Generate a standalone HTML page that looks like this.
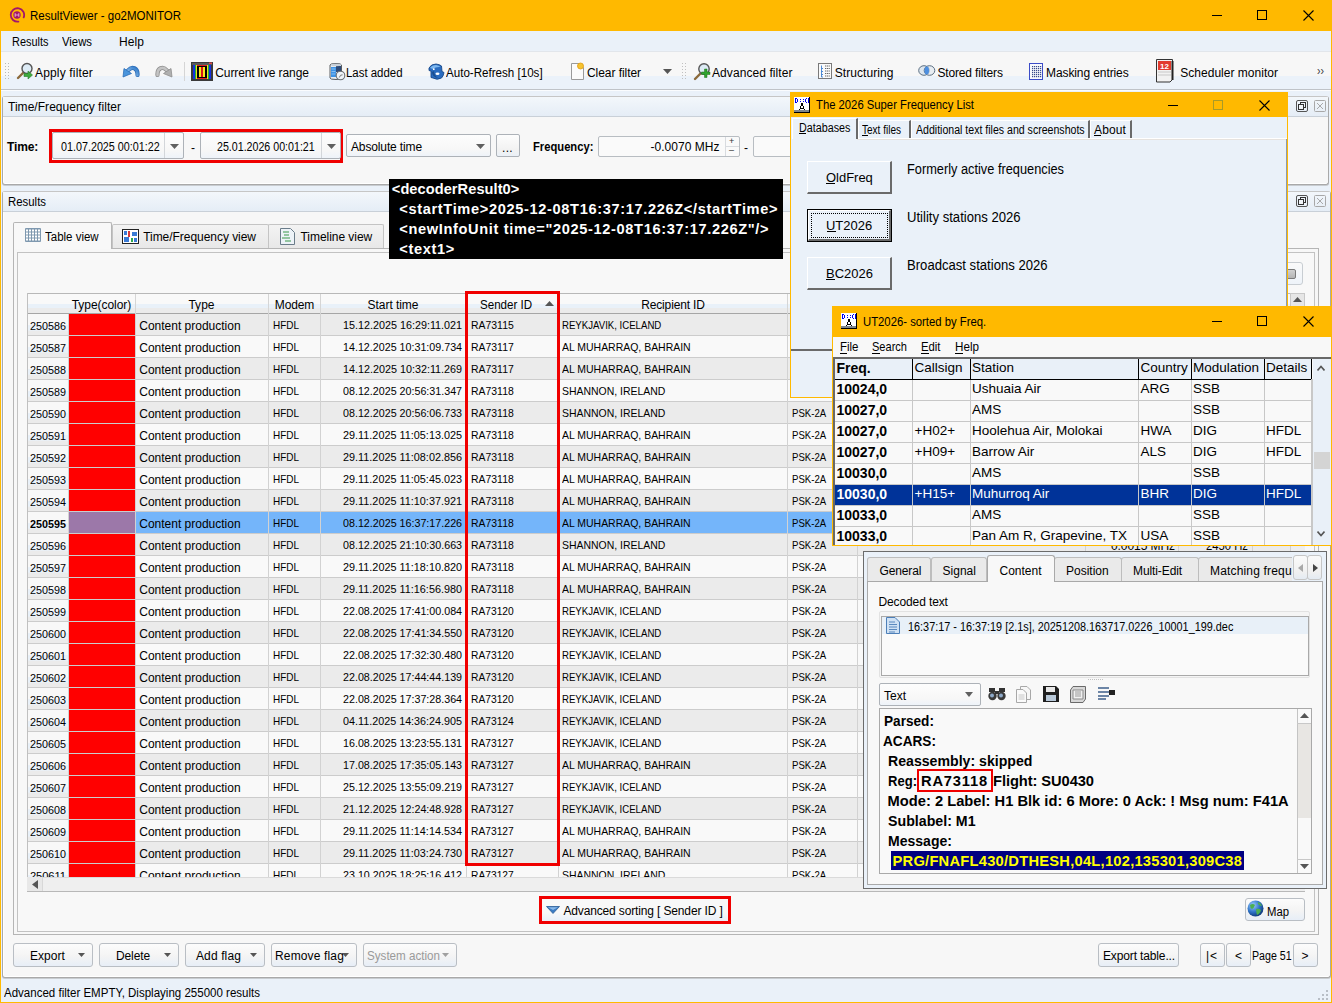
<!DOCTYPE html>
<html><head><meta charset="utf-8"><title>ResultViewer</title>
<style>
html,body{margin:0;padding:0;background:#F7F7F7;}
#root{position:relative;width:1332px;height:1003px;overflow:hidden;font-family:"Liberation Sans", sans-serif;color:#000;background:#F7F7F7;}
#root div{position:absolute;box-sizing:border-box;}
#root svg{position:absolute;}
.t{white-space:nowrap;line-height:1;}
</style></head><body><div id="root">

<div style="left:0px;top:0px;width:1332px;height:1003px;background:#FFB900;"></div>
<div style="left:1px;top:31px;width:1330px;height:971px;background:#EAF1F9;"></div>
<svg style="left:9px;top:7px" width="17" height="17" viewBox="0 0 17 17"><path d="M14.7 10.4 A6.7 6.7 0 1 0 9.4 14.6" fill="none" stroke="#A3166A" stroke-width="1.8" stroke-linecap="round"/><circle cx="8" cy="8" r="3.7" fill="#A3166A"/><path d="M6.2 6.3V9.7M9.8 6.3V9.7M6.2 8H9.8" stroke="#E3A6C8" stroke-width="1.1"/></svg>
<div class="t" style="left:30.00px;top:9.84px;font-size:12px;transform:scaleX(0.9581);transform-origin:0 0;">ResultViewer - go2MONITOR</div>
<div style="left:1212px;top:15px;width:10px;height:1px;background:#000;"></div>
<div style="left:1257px;top:10px;width:10px;height:10px;border:1px solid #000;"></div>
<svg style="left:1303px;top:10px" width="11" height="11" viewBox="0 0 11 11"><path d="M0.5 0.5L10.5 10.5M10.5 0.5L0.5 10.5" stroke="#000" stroke-width="1.1"/></svg>
<div style="left:1px;top:31px;width:1330px;height:21px;background:#EAF1F9;"></div>
<div class="t" style="left:11.50px;top:36.34px;font-size:12px;transform:scaleX(0.9097);transform-origin:0 0;">Results</div>
<div class="t" style="left:62.00px;top:36.34px;font-size:12px;transform:scaleX(0.9436);transform-origin:0 0;">Views</div>
<div class="t" style="left:119.00px;top:36.34px;font-size:12px;letter-spacing:0.080px;">Help</div>
<div style="left:1px;top:51px;width:1330px;height:1px;background:#E2E6EB;"></div>
<div style="left:1px;top:52px;width:1330px;height:24px;background:#F7F7F7;"></div>
<div style="left:1px;top:76px;width:1330px;height:13px;background:#EBF2FA;"></div>
<div style="left:1px;top:89px;width:1330px;height:1px;background:#BFC3C8;"></div>
<div style="left:1px;top:90px;width:1330px;height:1px;background:#FAFCFE;"></div>
<svg style="left:5px;top:62px" width="6" height="19"><rect x="0" y="1" width="1" height="1" fill="#B8B8B8"/><rect x="0" y="4" width="1" height="1" fill="#B8B8B8"/><rect x="0" y="7" width="1" height="1" fill="#B8B8B8"/><rect x="0" y="10" width="1" height="1" fill="#B8B8B8"/><rect x="0" y="13" width="1" height="1" fill="#B8B8B8"/><rect x="0" y="16" width="1" height="1" fill="#B8B8B8"/><rect x="3" y="1" width="1" height="1" fill="#B8B8B8"/><rect x="3" y="4" width="1" height="1" fill="#B8B8B8"/><rect x="3" y="7" width="1" height="1" fill="#B8B8B8"/><rect x="3" y="10" width="1" height="1" fill="#B8B8B8"/><rect x="3" y="13" width="1" height="1" fill="#B8B8B8"/><rect x="3" y="16" width="1" height="1" fill="#B8B8B8"/></svg>
<svg style="left:16px;top:62px" width="18" height="18" viewBox="0 0 18 18"><line x1="2" y1="16" x2="7" y2="11" stroke="#8C6A3A" stroke-width="2.4" stroke-linecap="round"/><circle cx="11" cy="6.5" r="5" fill="#DDEBF5" stroke="#555" stroke-width="1.4"/><path d="M8 11.5h4v-2.5l4.5 4 -4.5 4v-2.5h-4z" fill="#3DAA3D" stroke="#2A7A2A" stroke-width="0.6"/></svg>
<div class="t" style="left:35.00px;top:67.34px;font-size:12px;letter-spacing:0.165px;">Apply filter</div>
<svg style="left:122px;top:64px" width="18" height="14" viewBox="0 0 18 14"><defs><linearGradient id="ug" x1="0" y1="1" x2="1" y2="0"><stop offset="0" stop-color="#9CCBF2"/><stop offset="1" stop-color="#2E78C8"/></linearGradient></defs><path d="M15.5 11 C16 4, 10 1.5, 6 6.5" fill="none" stroke="#2C6DB8" stroke-width="4.2" stroke-linecap="round"/><path d="M15.5 11 C16 4, 10 1.5, 6 6.5" fill="none" stroke="url(#ug)" stroke-width="2.6" stroke-linecap="round"/><path d="M1 13 L2 4.5 L9.5 9.5Z" fill="#4A95DC" stroke="#2C6DB8" stroke-width="0.8" stroke-linejoin="round"/></svg>
<svg style="left:155px;top:64px" width="18" height="14" viewBox="0 0 18 14"><path d="M2.5 11 C2 4, 8 1.5, 12 6.5" fill="none" stroke="#8E8E8E" stroke-width="4.2" stroke-linecap="round"/><path d="M2.5 11 C2 4, 8 1.5, 12 6.5" fill="none" stroke="#C4C4C4" stroke-width="2.6" stroke-linecap="round"/><path d="M17 13 L16 4.5 L8.5 9.5Z" fill="#B0B0B0" stroke="#8E8E8E" stroke-width="0.8" stroke-linejoin="round"/></svg>
<div style="left:184px;top:62px;width:1px;height:19px;background:#D5D5D5;"></div>
<svg style="left:191px;top:62px" width="22" height="19" viewBox="0 0 22 19"><rect x="0" y="0" width="22" height="19" fill="#3A3A3A"/><rect x="1" y="1" width="20" height="2" fill="#5A5A5A"/><rect x="18" y="0.5" width="3" height="1.5" fill="#E04848"/><rect x="2" y="3" width="18" height="14" fill="#1430E0"/><rect x="4" y="3" width="14" height="14" fill="#20B030"/><rect x="5" y="3" width="12" height="14" fill="#F0E020"/><rect x="6" y="3" width="10" height="14" fill="#E02020"/><rect x="6" y="4" width="10" height="12" fill="#000"/><rect x="8" y="5" width="6" height="10" fill="#F6E81C"/><rect x="10" y="5" width="2" height="10" fill="#D81818"/></svg>
<div class="t" style="left:215.30px;top:67.34px;font-size:12px;letter-spacing:-0.105px;">Current live range</div>
<svg style="left:329px;top:62px" width="17" height="19" viewBox="0 0 17 19"><path d="M1 3 Q1 1.5 7 1.5 Q12.5 1.5 12.5 3 V16 Q12.5 17.5 7 17.5 Q1 17.5 1 16Z" fill="#E8ECF0" stroke="#5A5E62" stroke-width="1"/><rect x="2" y="5" width="5" height="10" fill="#3D93E6"/><rect x="7" y="4" width="5" height="6" fill="#2D4A78"/><path d="M2.5 7h4M2.5 9.5h4M2.5 12h4" stroke="#9CCAF2" stroke-width="0.8"/><ellipse cx="7" cy="3" rx="5" ry="1.2" fill="#C8D0D8"/><circle cx="11.5" cy="13.5" r="4.3" fill="#EEF3F8" stroke="#6A6E72" stroke-width="1.1"/><path d="M10.3 15.5L11.5 13.3L13.5 12.8" stroke="#777" stroke-width="1" fill="none"/></svg>
<div class="t" style="left:346.00px;top:67.34px;font-size:12px;transform:scaleX(0.9514);transform-origin:0 0;">Last added</div>
<svg style="left:427px;top:62px" width="18" height="19" viewBox="0 0 18 19"><path d="M2 6 Q4 2 9 2 Q13 2.5 14.5 4 L15 9.5 L17 10.5 Q16.5 14 14.5 16 Q10 18.5 6 16 L4 15.5 L4 9 L2 8.5Z" fill="#2A6CC0" stroke="#17488A" stroke-width="0.9"/><path d="M3 6 Q5 3 9 3 Q12 3.5 13.5 5 Q9 4.5 6 7Z" fill="#7DB8F0"/><path d="M5 10 Q5 15 11 16 Q7 13 7 9Z" fill="#1C4F90"/><ellipse cx="10.5" cy="11.8" rx="2" ry="1.3" fill="#FFFFFF"/><circle cx="6.8" cy="7.2" r="0.9" fill="#FFFFFF"/></svg>
<div class="t" style="left:446.40px;top:67.34px;font-size:12px;transform:scaleX(0.9655);transform-origin:0 0;">Auto-Refresh [10s]</div>
<svg style="left:570px;top:62px" width="15" height="19" viewBox="0 0 15 19"><path d="M1.5 1.5H9.5L13.5 5.5V17.5H1.5Z" fill="#FBFBFB" stroke="#9A9A9A" stroke-width="1"/><circle cx="10.5" cy="4" r="3" fill="#F6C430" stroke="#E09A10" stroke-width="0.8"/></svg>
<div class="t" style="left:587.00px;top:67.34px;font-size:12px;letter-spacing:-0.057px;">Clear filter</div>
<svg style="left:663px;top:69px" width="9" height="5" viewBox="0 0 9 5"><path d="M0 0H9L4.5 5Z" fill="#555"/></svg>
<svg style="left:682px;top:62px" width="5" height="19"><rect x="0" y="1" width="1" height="1" fill="#C0C0C0"/><rect x="0" y="4" width="1" height="1" fill="#C0C0C0"/><rect x="0" y="7" width="1" height="1" fill="#C0C0C0"/><rect x="0" y="10" width="1" height="1" fill="#C0C0C0"/><rect x="0" y="13" width="1" height="1" fill="#C0C0C0"/><rect x="0" y="16" width="1" height="1" fill="#C0C0C0"/><rect x="3" y="1" width="1" height="1" fill="#C0C0C0"/><rect x="3" y="4" width="1" height="1" fill="#C0C0C0"/><rect x="3" y="7" width="1" height="1" fill="#C0C0C0"/><rect x="3" y="10" width="1" height="1" fill="#C0C0C0"/><rect x="3" y="13" width="1" height="1" fill="#C0C0C0"/><rect x="3" y="16" width="1" height="1" fill="#C0C0C0"/></svg>
<svg style="left:693px;top:62px" width="18" height="19" viewBox="0 0 18 19"><line x1="2" y1="17" x2="7" y2="12" stroke="#8C6A3A" stroke-width="2.4" stroke-linecap="round"/><circle cx="11" cy="7" r="5.2" fill="#DDEBF5" stroke="#555" stroke-width="1.4"/><path d="M11 10h3v-3h2.5v3h3v2.5h-3v3h-2.5v-3h-3z" transform="translate(-2.5,0)" fill="#2FA32F" stroke="#1F6F1F" stroke-width="0.5"/></svg>
<div class="t" style="left:712.00px;top:67.34px;font-size:12px;letter-spacing:0.075px;">Advanced filter</div>
<svg style="left:818px;top:63px" width="14" height="16" viewBox="0 0 14 16"><rect x="0.5" y="0.5" width="13" height="15" fill="#FAFAFA" stroke="#7A7A7A"/><path d="M3.5 2.5V14M3.5 5.5H5M3.5 8.5H5M3.5 11.5H5M3.5 14H5" stroke="#3C7FD0" stroke-width="0.9" fill="none"/><path d="M7 3h5M7 5.5h5M7 8h5M7 10.5h5M7 13h5" stroke="#555" stroke-width="0.9" stroke-dasharray="1.2 0.6"/></svg>
<div class="t" style="left:834.70px;top:67.34px;font-size:12px;letter-spacing:0.070px;">Structuring</div>
<svg style="left:918px;top:65px" width="18" height="11" viewBox="0 0 18 11"><ellipse cx="6" cy="5.5" rx="5.3" ry="4.8" fill="#DDE6EE" stroke="#5A6E82" stroke-width="1"/><ellipse cx="11.5" cy="5.5" rx="5.3" ry="4.8" fill="#DDE6EE" fill-opacity="0.6" stroke="#5A6E82" stroke-width="1"/><ellipse cx="8.75" cy="5.5" rx="2.3" ry="3.9" fill="#4D8FE0"/></svg>
<div class="t" style="left:937.40px;top:67.34px;font-size:12px;letter-spacing:-0.140px;">Stored filters</div>
<svg style="left:1029px;top:63px" width="15" height="17" viewBox="0 0 15 17"><rect x="0.5" y="0.5" width="13" height="16" fill="#F8F9FD" stroke="#3C4CC8"/><rect x="3" y="3" width="1.2" height="1.2" fill="#3A4A8A"/><rect x="5" y="3" width="1.2" height="1.2" fill="#3A4A8A"/><rect x="7" y="3" width="1.2" height="1.2" fill="#3A4A8A"/><rect x="9" y="3" width="1.2" height="1.2" fill="#3A4A8A"/><rect x="11" y="3" width="1.2" height="1.2" fill="#3A4A8A"/><rect x="3" y="5" width="1.2" height="1.2" fill="#3A4A8A"/><rect x="5" y="5" width="1.2" height="1.2" fill="#3A4A8A"/><rect x="7" y="5" width="1.2" height="1.2" fill="#3A4A8A"/><rect x="9" y="5" width="1.2" height="1.2" fill="#3A4A8A"/><rect x="11" y="5" width="1.2" height="1.2" fill="#3A4A8A"/><rect x="3" y="7" width="1.2" height="1.2" fill="#3A4A8A"/><rect x="5" y="7" width="1.2" height="1.2" fill="#3A4A8A"/><rect x="7" y="7" width="1.2" height="1.2" fill="#3A4A8A"/><rect x="9" y="7" width="1.2" height="1.2" fill="#3A4A8A"/><rect x="11" y="7" width="1.2" height="1.2" fill="#3A4A8A"/><rect x="3" y="9" width="1.2" height="1.2" fill="#3A4A8A"/><rect x="5" y="9" width="1.2" height="1.2" fill="#3A4A8A"/><rect x="7" y="9" width="1.2" height="1.2" fill="#3A4A8A"/><rect x="9" y="9" width="1.2" height="1.2" fill="#3A4A8A"/><rect x="11" y="9" width="1.2" height="1.2" fill="#3A4A8A"/><rect x="3" y="11" width="1.2" height="1.2" fill="#3A4A8A"/><rect x="5" y="11" width="1.2" height="1.2" fill="#3A4A8A"/><rect x="7" y="11" width="1.2" height="1.2" fill="#3A4A8A"/><rect x="9" y="11" width="1.2" height="1.2" fill="#3A4A8A"/><rect x="11" y="11" width="1.2" height="1.2" fill="#3A4A8A"/><rect x="3" y="13" width="1.2" height="1.2" fill="#3A4A8A"/><rect x="5" y="13" width="1.2" height="1.2" fill="#3A4A8A"/><rect x="7" y="13" width="1.2" height="1.2" fill="#3A4A8A"/><rect x="9" y="13" width="1.2" height="1.2" fill="#3A4A8A"/><rect x="11" y="13" width="1.2" height="1.2" fill="#3A4A8A"/></svg>
<div class="t" style="left:1046.00px;top:67.34px;font-size:12px;letter-spacing:-0.096px;">Masking entries</div>
<svg style="left:1155px;top:58px" width="21" height="25" viewBox="0 0 21 25"><path d="M1.5 1.5H17.5V21.5L15 24H1.5Z" fill="#F2F2F2" stroke="#333" stroke-width="1"/><rect x="3" y="3" width="13" height="9" fill="#E23B2E"/><text x="9.5" y="10.5" font-family="Liberation Sans" font-size="8" font-weight="700" fill="#fff" text-anchor="middle">12</text><path d="M3 14h13M3 17h13" stroke="#C8C8C8" stroke-width="1"/><path d="M17.5 3V22" stroke="#222" stroke-width="2"/></svg>
<div class="t" style="left:1180.30px;top:67.34px;font-size:12px;letter-spacing:0.018px;">Scheduler monitor</div>
<div class="t" style="left:1317.00px;top:64.84px;font-size:12px;transform:scaleX(0.8758);transform-origin:0 0;color:#444;">››</div>
<div style="left:2px;top:96px;width:1327px;height:89px;background:#F7F7F7;border:1px solid #A9A9A9;border-top-color:#C6C6C6;border-radius:3px;box-shadow:inset 1px 0 0 #FFF,inset 0 -1px 0 #FFF,0 1px 0 #C8CCD0;"></div>
<div style="left:3px;top:97px;width:1325px;height:20px;background:linear-gradient(#F3F7FB,#E5EDF6);border-bottom:1px solid #C9D0D8;"></div>
<div class="t" style="left:8.00px;top:100.84px;font-size:12px;letter-spacing:0.035px;">Time/Frequency filter</div>
<svg style="left:1296px;top:100px" width="12" height="12" viewBox="0 0 12 12"><rect x="0.5" y="0.5" width="11" height="11" rx="1.5" fill="none" stroke="#555"/><rect x="4.5" y="2.5" width="5" height="5" fill="none" stroke="#333"/><rect x="2.5" y="4.5" width="5" height="5" fill="#F0F4F8" stroke="#333"/></svg>
<svg style="left:1314px;top:100px" width="12" height="12" viewBox="0 0 12 12"><rect x="0.5" y="0.5" width="11" height="11" rx="1" fill="none" stroke="#A8A8A8"/><path d="M3 3L9 9M9 3L3 9" stroke="#A0A0A0" stroke-width="0.9"/></svg>
<div class="t" style="left:7.00px;top:141.34px;font-size:12px;font-weight:700;letter-spacing:-0.158px;">Time:</div>
<div style="left:49px;top:129px;width:294px;height:34px;border:3px solid #F00000;"></div>
<div style="left:52px;top:132px;width:132px;height:27px;background:linear-gradient(#FDFDFD 0%,#F7F7F7 70%,#EEF3F9 100%);border:1px solid #ADB2B8;border-radius:2px;"></div>
<div style="left:164px;top:133px;width:1px;height:25px;background:#D3D6DA;"></div>
<svg style="left:169.5px;top:143.5px" width="9" height="5" viewBox="0 0 9 5"><path d="M0 0H9L4.5 5Z" fill="#606060"/></svg>
<div class="t" style="left:61.00px;top:140.54px;font-size:12px;transform:scaleX(0.8964);transform-origin:0 0;">01.07.2025 00:01:22</div>
<div class="t" style="left:191.00px;top:141.54px;font-size:12px;">-</div>
<div style="left:200px;top:132px;width:141px;height:27px;background:linear-gradient(#FDFDFD 0%,#F7F7F7 70%,#EEF3F9 100%);border:1px solid #ADB2B8;border-radius:2px;"></div>
<div style="left:321px;top:133px;width:1px;height:25px;background:#D3D6DA;"></div>
<svg style="left:326.5px;top:143.5px" width="9" height="5" viewBox="0 0 9 5"><path d="M0 0H9L4.5 5Z" fill="#606060"/></svg>
<div class="t" style="left:217.30px;top:140.54px;font-size:12px;transform:scaleX(0.8873);transform-origin:0 0;">25.01.2026 00:01:21</div>
<div style="left:346px;top:134px;width:145px;height:23px;background:linear-gradient(#FDFDFD 0%,#F7F7F7 70%,#EEF3F9 100%);border:1px solid #ADB2B8;border-radius:2px;"></div>
<svg style="left:475.5px;top:143.5px" width="9" height="5" viewBox="0 0 9 5"><path d="M0 0H9L4.5 5Z" fill="#606060"/></svg>
<div style="left:468px;top:135px;width:1px;height:21px;background:transparent;"></div>
<div class="t" style="left:351.00px;top:140.54px;font-size:12px;letter-spacing:-0.131px;">Absolute time</div>
<div style="left:496px;top:134px;width:24px;height:23px;background:linear-gradient(#FDFDFD,#F2F2F2 70%,#EAF0F7);border:1px solid #ADB2B8;border-radius:2px;"></div>
<div class="t" style="left:502.00px;top:141.84px;font-size:12px;letter-spacing:0.333px;">...</div>
<div class="t" style="left:533.40px;top:140.54px;font-size:12px;font-weight:700;transform:scaleX(0.9338);transform-origin:0 0;">Frequency:</div>
<div style="left:598px;top:136px;width:142px;height:21px;background:#FAFAFA;border:1px solid #B8BDC2;border-radius:2px;"></div>
<div style="left:725px;top:137px;width:1px;height:19px;background:#D8DBDF;"></div>
<div class="t" style="left:729.00px;top:137.38px;font-size:9px;color:#333;">+</div>
<div class="t" style="left:729.00px;top:146.38px;font-size:9px;color:#333;">–</div>
<div style="left:726px;top:146px;width:13px;height:1px;background:#D8DBDF;"></div>
<div class="t" style="left:650.50px;top:140.54px;font-size:12px;letter-spacing:0.028px;">-0.0070 MHz</div>
<div class="t" style="left:744.00px;top:141.54px;font-size:12px;">-</div>
<div style="left:753px;top:136px;width:45px;height:21px;background:#FAFAFA;border:1px solid #B8BDC2;border-radius:2px;"></div>
<div style="left:2px;top:191px;width:1329px;height:787px;background:#F7F7F7;border:1px solid #A9A9A9;border-top-color:#C6C6C6;border-radius:3px;box-shadow:inset 1px 0 0 #FFF,inset 0 -1px 0 #FFF,0 1px 0 #C8CCD0;"></div>
<div style="left:3px;top:192px;width:1327px;height:20px;background:linear-gradient(#F3F7FB,#E5EDF6);border-bottom:1px solid #C9D0D8;"></div>
<div class="t" style="left:8.00px;top:195.84px;font-size:12px;transform:scaleX(0.9497);transform-origin:0 0;">Results</div>
<svg style="left:1296px;top:195px" width="12" height="12" viewBox="0 0 12 12"><rect x="0.5" y="0.5" width="11" height="11" rx="1.5" fill="none" stroke="#555"/><rect x="4.5" y="2.5" width="5" height="5" fill="none" stroke="#333"/><rect x="2.5" y="4.5" width="5" height="5" fill="#F0F4F8" stroke="#333"/></svg>
<svg style="left:1314px;top:195px" width="12" height="12" viewBox="0 0 12 12"><rect x="0.5" y="0.5" width="11" height="11" rx="1" fill="none" stroke="#A8A8A8"/><path d="M3 3L9 9M9 3L3 9" stroke="#A0A0A0" stroke-width="0.9"/></svg>
<div style="left:13px;top:248px;width:1306px;height:687px;border:1px solid #B5B5B5;background:#F7F7F7;"></div>
<div style="left:17px;top:252px;width:1298px;height:680px;border:1px solid #C2C2C2;background:#F8F8F8;"></div>
<div style="left:112px;top:224px;width:157px;height:24px;background:linear-gradient(#F3F3F3,#E8E8E8);border:1px solid #C4C4C4;border-bottom:none;border-radius:2px 2px 0 0;"></div>
<div style="left:268px;top:224px;width:116px;height:24px;background:linear-gradient(#F3F3F3,#E8E8E8);border:1px solid #C4C4C4;border-bottom:none;border-radius:2px 2px 0 0;"></div>
<div style="left:13px;top:222px;width:99px;height:27px;background:#F8F8F8;border:1px solid #B5B5B5;border-bottom:none;border-radius:2px 2px 0 0;"></div>
<svg style="left:25px;top:228px" width="16" height="14" viewBox="0 0 16 14"><rect x="0" y="0" width="16" height="14" rx="1" fill="#7E98AF"/><rect x="1" y="1.5" width="2" height="2" fill="#FFFFFF"/><rect x="1" y="4.5" width="2" height="2" fill="#FFFFFF"/><rect x="1" y="7.5" width="2" height="2" fill="#FFFFFF"/><rect x="1" y="10.5" width="2" height="2" fill="#FFFFFF"/><rect x="4" y="1.5" width="2" height="2" fill="#FFFFFF"/><rect x="4" y="4.5" width="2" height="2" fill="#FFFFFF"/><rect x="4" y="7.5" width="2" height="2" fill="#FFFFFF"/><rect x="4" y="10.5" width="2" height="2" fill="#FFFFFF"/><rect x="7" y="1.5" width="2" height="2" fill="#FFFFFF"/><rect x="7" y="4.5" width="2" height="2" fill="#FFFFFF"/><rect x="7" y="7.5" width="2" height="2" fill="#FFFFFF"/><rect x="7" y="10.5" width="2" height="2" fill="#FFFFFF"/><rect x="10" y="1.5" width="2" height="2" fill="#FFFFFF"/><rect x="10" y="4.5" width="2" height="2" fill="#FFFFFF"/><rect x="10" y="7.5" width="2" height="2" fill="#FFFFFF"/><rect x="10" y="10.5" width="2" height="2" fill="#FFFFFF"/><rect x="13" y="1.5" width="2" height="2" fill="#FFFFFF"/><rect x="13" y="4.5" width="2" height="2" fill="#FFFFFF"/><rect x="13" y="7.5" width="2" height="2" fill="#FFFFFF"/><rect x="13" y="10.5" width="2" height="2" fill="#FFFFFF"/></svg>
<div class="t" style="left:45.00px;top:230.64px;font-size:12px;transform:scaleX(0.9567);transform-origin:0 0;">Table view</div>
<svg style="left:122px;top:229px" width="17" height="15" viewBox="0 0 17 15"><rect x="0.5" y="0.5" width="16" height="14" fill="#fff" stroke="#222"/><rect x="2" y="2" width="3" height="4" fill="#3A7BD5"/><rect x="6" y="2" width="2" height="6" fill="#D53A3A"/><rect x="10" y="3" width="5" height="4" fill="#3A7BD5"/><rect x="2" y="8" width="5" height="5" fill="#3A7BD5"/><rect x="9" y="9" width="2" height="4" fill="#2EA84A"/><rect x="12" y="9" width="3" height="4" fill="#3A7BD5"/></svg>
<div class="t" style="left:143.20px;top:230.84px;font-size:12px;letter-spacing:-0.042px;">Time/Frequency view</div>
<svg style="left:280px;top:228px" width="15" height="17" viewBox="0 0 15 17"><path d="M0.5 0.5H10.5L14.5 4.5V16.5H0.5Z" fill="#EDF3F8" stroke="#6A7C8A"/><path d="M3 4h6M4 7h5M2 10h8M5 13h6" stroke="#3A9A4A" stroke-width="1.2"/></svg>
<div class="t" style="left:300.50px;top:230.84px;font-size:12px;letter-spacing:-0.042px;">Timeline view</div>
<div style="left:27px;top:293px;width:1278px;height:599px;overflow:hidden;background:#F9F9F9;">
<div style="left:0px;top:0px;width:1278px;height:21px;background:linear-gradient(#F9F9F9 0%,#F9F9F9 52%,#E9F1F9 53%,#E9F1F9 73%,#EBEBEB 74%,#EBEBEB 100%);border-top:1px solid #B8B8B8;border-bottom:1px solid #A6A6A6;"></div>
<div style="left:108px;top:1px;width:1px;height:20px;background:#D5D5D5;"></div>
<div style="left:241px;top:1px;width:1px;height:20px;background:#D5D5D5;"></div>
<div style="left:293px;top:1px;width:1px;height:20px;background:#D5D5D5;"></div>
<div style="left:439px;top:1px;width:1px;height:20px;background:#D5D5D5;"></div>
<div style="left:531px;top:1px;width:1px;height:20px;background:#D5D5D5;"></div>
<div style="left:760px;top:1px;width:1px;height:20px;background:#D5D5D5;"></div>
<div style="left:830px;top:1px;width:1px;height:20px;background:#D5D5D5;"></div>
<div style="left:1058px;top:1px;width:1px;height:20px;background:#D5D5D5;"></div>
<div style="left:1151px;top:1px;width:1px;height:20px;background:#D5D5D5;"></div>
<div style="left:1225px;top:1px;width:1px;height:20px;background:#D5D5D5;"></div>
<div style="left:1263px;top:1px;width:1px;height:20px;background:#D5D5D5;"></div>
<div class="t" style="left:44.70px;top:6.14px;font-size:12px;letter-spacing:-0.038px;">Type(color)</div>
<div class="t" style="left:161.43px;top:6.14px;font-size:12px;letter-spacing:0.031px;">Type</div>
<div class="t" style="left:247.84px;top:6.14px;font-size:12px;letter-spacing:-0.140px;">Modem</div>
<div class="t" style="left:340.61px;top:6.14px;font-size:12px;letter-spacing:-0.057px;">Start time</div>
<div class="t" style="left:452.91px;top:6.14px;font-size:12px;transform:scaleX(0.9656);transform-origin:0 0;">Sender ID</div>
<svg style="left:518px;top:8px" width="9" height="5" viewBox="0 0 9 5"><path d="M0 5H9L4.5 0Z" fill="#555"/></svg>
<div class="t" style="left:614.23px;top:6.14px;font-size:12px;letter-spacing:-0.152px;">Recipient ID</div>
<div style="left:0px;top:21px;width:1278px;height:22px;background:#EBEBEB;border-bottom:1px solid #CCCCCC;"></div>
<div style="left:42px;top:21px;width:67px;height:21px;background:#FF0000;"></div>
<div style="left:0px;top:21px;width:41px;height:21px;background:linear-gradient(#F8F8F8 0%,#F8F8F8 50%,#E9F1F9 55%,#E9F1F9 78%,#EBEBEB 80%,#EBEBEB 100%);"></div>
<div style="left:108px;top:21px;width:1px;height:22px;background:#D2D2D2;"></div>
<div style="left:241px;top:21px;width:1px;height:22px;background:#D2D2D2;"></div>
<div style="left:293px;top:21px;width:1px;height:22px;background:#D2D2D2;"></div>
<div style="left:439px;top:21px;width:1px;height:22px;background:#D2D2D2;"></div>
<div style="left:531px;top:21px;width:1px;height:22px;background:#D2D2D2;"></div>
<div style="left:760px;top:21px;width:1px;height:22px;background:#D2D2D2;"></div>
<div style="left:830px;top:21px;width:1px;height:22px;background:#D2D2D2;"></div>
<div style="left:1058px;top:21px;width:1px;height:22px;background:#D2D2D2;"></div>
<div style="left:1151px;top:21px;width:1px;height:22px;background:#D2D2D2;"></div>
<div style="left:1225px;top:21px;width:1px;height:22px;background:#D2D2D2;"></div>
<div style="left:1263px;top:21px;width:1px;height:22px;background:#D2D2D2;"></div>
<div style="left:41px;top:21px;width:1px;height:22px;background:#D2D2D2;"></div>
<div class="t" style="left:2.90px;top:28.02px;font-size:11.2px;transform:scaleX(0.9632);transform-origin:0 0;">250586</div>
<div class="t" style="left:112.30px;top:27.34px;font-size:12px;letter-spacing:-0.008px;">Content production</div>
<div class="t" style="left:246.00px;top:27.02px;font-size:11.2px;transform:scaleX(0.8890);transform-origin:0 0;">HFDL</div>
<div class="t" style="left:316.10px;top:27.02px;font-size:11.2px;transform:scaleX(0.9634);transform-origin:0 0;">15.12.2025 16:29:11.021</div>
<div class="t" style="left:443.80px;top:27.02px;font-size:11.2px;transform:scaleX(0.9330);transform-origin:0 0;">RA73115</div>
<div class="t" style="left:535.40px;top:27.02px;font-size:11.2px;transform:scaleX(0.8601);transform-origin:0 0;">REYKJAVIK, ICELAND</div>
<div class="t" style="left:764.60px;top:27.02px;font-size:11.2px;transform:scaleX(0.8584);transform-origin:0 0;">PSK-2A</div>
<div style="left:0px;top:43px;width:1278px;height:22px;background:#F9F9F9;border-bottom:1px solid #CCCCCC;"></div>
<div style="left:42px;top:43px;width:67px;height:21px;background:#FF0000;"></div>
<div style="left:0px;top:43px;width:41px;height:21px;background:linear-gradient(#F8F8F8 0%,#F8F8F8 50%,#E9F1F9 55%,#E9F1F9 78%,#EBEBEB 80%,#EBEBEB 100%);"></div>
<div style="left:108px;top:43px;width:1px;height:22px;background:#D2D2D2;"></div>
<div style="left:241px;top:43px;width:1px;height:22px;background:#D2D2D2;"></div>
<div style="left:293px;top:43px;width:1px;height:22px;background:#D2D2D2;"></div>
<div style="left:439px;top:43px;width:1px;height:22px;background:#D2D2D2;"></div>
<div style="left:531px;top:43px;width:1px;height:22px;background:#D2D2D2;"></div>
<div style="left:760px;top:43px;width:1px;height:22px;background:#D2D2D2;"></div>
<div style="left:830px;top:43px;width:1px;height:22px;background:#D2D2D2;"></div>
<div style="left:1058px;top:43px;width:1px;height:22px;background:#D2D2D2;"></div>
<div style="left:1151px;top:43px;width:1px;height:22px;background:#D2D2D2;"></div>
<div style="left:1225px;top:43px;width:1px;height:22px;background:#D2D2D2;"></div>
<div style="left:1263px;top:43px;width:1px;height:22px;background:#D2D2D2;"></div>
<div style="left:41px;top:43px;width:1px;height:22px;background:#D2D2D2;"></div>
<div class="t" style="left:2.90px;top:50.02px;font-size:11.2px;transform:scaleX(0.9632);transform-origin:0 0;">250587</div>
<div class="t" style="left:112.30px;top:49.34px;font-size:12px;letter-spacing:-0.008px;">Content production</div>
<div class="t" style="left:246.00px;top:49.02px;font-size:11.2px;transform:scaleX(0.8890);transform-origin:0 0;">HFDL</div>
<div class="t" style="left:316.10px;top:49.02px;font-size:11.2px;transform:scaleX(0.9569);transform-origin:0 0;">14.12.2025 10:31:09.734</div>
<div class="t" style="left:443.80px;top:49.02px;font-size:11.2px;transform:scaleX(0.9330);transform-origin:0 0;">RA73117</div>
<div class="t" style="left:535.40px;top:49.02px;font-size:11.2px;transform:scaleX(0.9351);transform-origin:0 0;">AL MUHARRAQ, BAHRAIN</div>
<div class="t" style="left:764.60px;top:49.02px;font-size:11.2px;transform:scaleX(0.8584);transform-origin:0 0;">PSK-2A</div>
<div style="left:0px;top:65px;width:1278px;height:22px;background:#EBEBEB;border-bottom:1px solid #CCCCCC;"></div>
<div style="left:42px;top:65px;width:67px;height:21px;background:#FF0000;"></div>
<div style="left:0px;top:65px;width:41px;height:21px;background:linear-gradient(#F8F8F8 0%,#F8F8F8 50%,#E9F1F9 55%,#E9F1F9 78%,#EBEBEB 80%,#EBEBEB 100%);"></div>
<div style="left:108px;top:65px;width:1px;height:22px;background:#D2D2D2;"></div>
<div style="left:241px;top:65px;width:1px;height:22px;background:#D2D2D2;"></div>
<div style="left:293px;top:65px;width:1px;height:22px;background:#D2D2D2;"></div>
<div style="left:439px;top:65px;width:1px;height:22px;background:#D2D2D2;"></div>
<div style="left:531px;top:65px;width:1px;height:22px;background:#D2D2D2;"></div>
<div style="left:760px;top:65px;width:1px;height:22px;background:#D2D2D2;"></div>
<div style="left:830px;top:65px;width:1px;height:22px;background:#D2D2D2;"></div>
<div style="left:1058px;top:65px;width:1px;height:22px;background:#D2D2D2;"></div>
<div style="left:1151px;top:65px;width:1px;height:22px;background:#D2D2D2;"></div>
<div style="left:1225px;top:65px;width:1px;height:22px;background:#D2D2D2;"></div>
<div style="left:1263px;top:65px;width:1px;height:22px;background:#D2D2D2;"></div>
<div style="left:41px;top:65px;width:1px;height:22px;background:#D2D2D2;"></div>
<div class="t" style="left:2.90px;top:72.02px;font-size:11.2px;transform:scaleX(0.9632);transform-origin:0 0;">250588</div>
<div class="t" style="left:112.30px;top:71.34px;font-size:12px;letter-spacing:-0.008px;">Content production</div>
<div class="t" style="left:246.00px;top:71.02px;font-size:11.2px;transform:scaleX(0.8890);transform-origin:0 0;">HFDL</div>
<div class="t" style="left:316.10px;top:71.02px;font-size:11.2px;transform:scaleX(0.9634);transform-origin:0 0;">14.12.2025 10:32:11.269</div>
<div class="t" style="left:443.80px;top:71.02px;font-size:11.2px;transform:scaleX(0.9330);transform-origin:0 0;">RA73117</div>
<div class="t" style="left:535.40px;top:71.02px;font-size:11.2px;transform:scaleX(0.9351);transform-origin:0 0;">AL MUHARRAQ, BAHRAIN</div>
<div class="t" style="left:764.60px;top:71.02px;font-size:11.2px;transform:scaleX(0.8584);transform-origin:0 0;">PSK-2A</div>
<div style="left:0px;top:87px;width:1278px;height:22px;background:#F9F9F9;border-bottom:1px solid #CCCCCC;"></div>
<div style="left:42px;top:87px;width:67px;height:21px;background:#FF0000;"></div>
<div style="left:0px;top:87px;width:41px;height:21px;background:linear-gradient(#F8F8F8 0%,#F8F8F8 50%,#E9F1F9 55%,#E9F1F9 78%,#EBEBEB 80%,#EBEBEB 100%);"></div>
<div style="left:108px;top:87px;width:1px;height:22px;background:#D2D2D2;"></div>
<div style="left:241px;top:87px;width:1px;height:22px;background:#D2D2D2;"></div>
<div style="left:293px;top:87px;width:1px;height:22px;background:#D2D2D2;"></div>
<div style="left:439px;top:87px;width:1px;height:22px;background:#D2D2D2;"></div>
<div style="left:531px;top:87px;width:1px;height:22px;background:#D2D2D2;"></div>
<div style="left:760px;top:87px;width:1px;height:22px;background:#D2D2D2;"></div>
<div style="left:830px;top:87px;width:1px;height:22px;background:#D2D2D2;"></div>
<div style="left:1058px;top:87px;width:1px;height:22px;background:#D2D2D2;"></div>
<div style="left:1151px;top:87px;width:1px;height:22px;background:#D2D2D2;"></div>
<div style="left:1225px;top:87px;width:1px;height:22px;background:#D2D2D2;"></div>
<div style="left:1263px;top:87px;width:1px;height:22px;background:#D2D2D2;"></div>
<div style="left:41px;top:87px;width:1px;height:22px;background:#D2D2D2;"></div>
<div class="t" style="left:2.90px;top:94.02px;font-size:11.2px;transform:scaleX(0.9632);transform-origin:0 0;">250589</div>
<div class="t" style="left:112.30px;top:93.34px;font-size:12px;letter-spacing:-0.008px;">Content production</div>
<div class="t" style="left:246.00px;top:93.02px;font-size:11.2px;transform:scaleX(0.8890);transform-origin:0 0;">HFDL</div>
<div class="t" style="left:316.10px;top:93.02px;font-size:11.2px;transform:scaleX(0.9569);transform-origin:0 0;">08.12.2025 20:56:31.347</div>
<div class="t" style="left:443.80px;top:93.02px;font-size:11.2px;transform:scaleX(0.9330);transform-origin:0 0;">RA73118</div>
<div class="t" style="left:535.40px;top:93.02px;font-size:11.2px;transform:scaleX(0.9334);transform-origin:0 0;">SHANNON, IRELAND</div>
<div class="t" style="left:764.60px;top:93.02px;font-size:11.2px;transform:scaleX(0.8584);transform-origin:0 0;">PSK-2A</div>
<div style="left:0px;top:109px;width:1278px;height:22px;background:#EBEBEB;border-bottom:1px solid #CCCCCC;"></div>
<div style="left:42px;top:109px;width:67px;height:21px;background:#FF0000;"></div>
<div style="left:0px;top:109px;width:41px;height:21px;background:linear-gradient(#F8F8F8 0%,#F8F8F8 50%,#E9F1F9 55%,#E9F1F9 78%,#EBEBEB 80%,#EBEBEB 100%);"></div>
<div style="left:108px;top:109px;width:1px;height:22px;background:#D2D2D2;"></div>
<div style="left:241px;top:109px;width:1px;height:22px;background:#D2D2D2;"></div>
<div style="left:293px;top:109px;width:1px;height:22px;background:#D2D2D2;"></div>
<div style="left:439px;top:109px;width:1px;height:22px;background:#D2D2D2;"></div>
<div style="left:531px;top:109px;width:1px;height:22px;background:#D2D2D2;"></div>
<div style="left:760px;top:109px;width:1px;height:22px;background:#D2D2D2;"></div>
<div style="left:830px;top:109px;width:1px;height:22px;background:#D2D2D2;"></div>
<div style="left:1058px;top:109px;width:1px;height:22px;background:#D2D2D2;"></div>
<div style="left:1151px;top:109px;width:1px;height:22px;background:#D2D2D2;"></div>
<div style="left:1225px;top:109px;width:1px;height:22px;background:#D2D2D2;"></div>
<div style="left:1263px;top:109px;width:1px;height:22px;background:#D2D2D2;"></div>
<div style="left:41px;top:109px;width:1px;height:22px;background:#D2D2D2;"></div>
<div class="t" style="left:2.90px;top:116.02px;font-size:11.2px;transform:scaleX(0.9632);transform-origin:0 0;">250590</div>
<div class="t" style="left:112.30px;top:115.34px;font-size:12px;letter-spacing:-0.008px;">Content production</div>
<div class="t" style="left:246.00px;top:115.02px;font-size:11.2px;transform:scaleX(0.8890);transform-origin:0 0;">HFDL</div>
<div class="t" style="left:316.10px;top:115.02px;font-size:11.2px;transform:scaleX(0.9569);transform-origin:0 0;">08.12.2025 20:56:06.733</div>
<div class="t" style="left:443.80px;top:115.02px;font-size:11.2px;transform:scaleX(0.9330);transform-origin:0 0;">RA73118</div>
<div class="t" style="left:535.40px;top:115.02px;font-size:11.2px;transform:scaleX(0.9334);transform-origin:0 0;">SHANNON, IRELAND</div>
<div class="t" style="left:764.60px;top:115.02px;font-size:11.2px;transform:scaleX(0.8584);transform-origin:0 0;">PSK-2A</div>
<div style="left:0px;top:131px;width:1278px;height:22px;background:#F9F9F9;border-bottom:1px solid #CCCCCC;"></div>
<div style="left:42px;top:131px;width:67px;height:21px;background:#FF0000;"></div>
<div style="left:0px;top:131px;width:41px;height:21px;background:linear-gradient(#F8F8F8 0%,#F8F8F8 50%,#E9F1F9 55%,#E9F1F9 78%,#EBEBEB 80%,#EBEBEB 100%);"></div>
<div style="left:108px;top:131px;width:1px;height:22px;background:#D2D2D2;"></div>
<div style="left:241px;top:131px;width:1px;height:22px;background:#D2D2D2;"></div>
<div style="left:293px;top:131px;width:1px;height:22px;background:#D2D2D2;"></div>
<div style="left:439px;top:131px;width:1px;height:22px;background:#D2D2D2;"></div>
<div style="left:531px;top:131px;width:1px;height:22px;background:#D2D2D2;"></div>
<div style="left:760px;top:131px;width:1px;height:22px;background:#D2D2D2;"></div>
<div style="left:830px;top:131px;width:1px;height:22px;background:#D2D2D2;"></div>
<div style="left:1058px;top:131px;width:1px;height:22px;background:#D2D2D2;"></div>
<div style="left:1151px;top:131px;width:1px;height:22px;background:#D2D2D2;"></div>
<div style="left:1225px;top:131px;width:1px;height:22px;background:#D2D2D2;"></div>
<div style="left:1263px;top:131px;width:1px;height:22px;background:#D2D2D2;"></div>
<div style="left:41px;top:131px;width:1px;height:22px;background:#D2D2D2;"></div>
<div class="t" style="left:2.90px;top:138.02px;font-size:11.2px;transform:scaleX(0.9632);transform-origin:0 0;">250591</div>
<div class="t" style="left:112.30px;top:137.34px;font-size:12px;letter-spacing:-0.008px;">Content production</div>
<div class="t" style="left:246.00px;top:137.02px;font-size:11.2px;transform:scaleX(0.8890);transform-origin:0 0;">HFDL</div>
<div class="t" style="left:316.10px;top:137.02px;font-size:11.2px;transform:scaleX(0.9699);transform-origin:0 0;">29.11.2025 11:05:13.025</div>
<div class="t" style="left:443.80px;top:137.02px;font-size:11.2px;transform:scaleX(0.9330);transform-origin:0 0;">RA73118</div>
<div class="t" style="left:535.40px;top:137.02px;font-size:11.2px;transform:scaleX(0.9351);transform-origin:0 0;">AL MUHARRAQ, BAHRAIN</div>
<div class="t" style="left:764.60px;top:137.02px;font-size:11.2px;transform:scaleX(0.8584);transform-origin:0 0;">PSK-2A</div>
<div style="left:0px;top:153px;width:1278px;height:22px;background:#EBEBEB;border-bottom:1px solid #CCCCCC;"></div>
<div style="left:42px;top:153px;width:67px;height:21px;background:#FF0000;"></div>
<div style="left:0px;top:153px;width:41px;height:21px;background:linear-gradient(#F8F8F8 0%,#F8F8F8 50%,#E9F1F9 55%,#E9F1F9 78%,#EBEBEB 80%,#EBEBEB 100%);"></div>
<div style="left:108px;top:153px;width:1px;height:22px;background:#D2D2D2;"></div>
<div style="left:241px;top:153px;width:1px;height:22px;background:#D2D2D2;"></div>
<div style="left:293px;top:153px;width:1px;height:22px;background:#D2D2D2;"></div>
<div style="left:439px;top:153px;width:1px;height:22px;background:#D2D2D2;"></div>
<div style="left:531px;top:153px;width:1px;height:22px;background:#D2D2D2;"></div>
<div style="left:760px;top:153px;width:1px;height:22px;background:#D2D2D2;"></div>
<div style="left:830px;top:153px;width:1px;height:22px;background:#D2D2D2;"></div>
<div style="left:1058px;top:153px;width:1px;height:22px;background:#D2D2D2;"></div>
<div style="left:1151px;top:153px;width:1px;height:22px;background:#D2D2D2;"></div>
<div style="left:1225px;top:153px;width:1px;height:22px;background:#D2D2D2;"></div>
<div style="left:1263px;top:153px;width:1px;height:22px;background:#D2D2D2;"></div>
<div style="left:41px;top:153px;width:1px;height:22px;background:#D2D2D2;"></div>
<div class="t" style="left:2.90px;top:160.02px;font-size:11.2px;transform:scaleX(0.9632);transform-origin:0 0;">250592</div>
<div class="t" style="left:112.30px;top:159.34px;font-size:12px;letter-spacing:-0.008px;">Content production</div>
<div class="t" style="left:246.00px;top:159.02px;font-size:11.2px;transform:scaleX(0.8890);transform-origin:0 0;">HFDL</div>
<div class="t" style="left:316.10px;top:159.02px;font-size:11.2px;transform:scaleX(0.9699);transform-origin:0 0;">29.11.2025 11:08:02.856</div>
<div class="t" style="left:443.80px;top:159.02px;font-size:11.2px;transform:scaleX(0.9330);transform-origin:0 0;">RA73118</div>
<div class="t" style="left:535.40px;top:159.02px;font-size:11.2px;transform:scaleX(0.9351);transform-origin:0 0;">AL MUHARRAQ, BAHRAIN</div>
<div class="t" style="left:764.60px;top:159.02px;font-size:11.2px;transform:scaleX(0.8584);transform-origin:0 0;">PSK-2A</div>
<div style="left:0px;top:175px;width:1278px;height:22px;background:#F9F9F9;border-bottom:1px solid #CCCCCC;"></div>
<div style="left:42px;top:175px;width:67px;height:21px;background:#FF0000;"></div>
<div style="left:0px;top:175px;width:41px;height:21px;background:linear-gradient(#F8F8F8 0%,#F8F8F8 50%,#E9F1F9 55%,#E9F1F9 78%,#EBEBEB 80%,#EBEBEB 100%);"></div>
<div style="left:108px;top:175px;width:1px;height:22px;background:#D2D2D2;"></div>
<div style="left:241px;top:175px;width:1px;height:22px;background:#D2D2D2;"></div>
<div style="left:293px;top:175px;width:1px;height:22px;background:#D2D2D2;"></div>
<div style="left:439px;top:175px;width:1px;height:22px;background:#D2D2D2;"></div>
<div style="left:531px;top:175px;width:1px;height:22px;background:#D2D2D2;"></div>
<div style="left:760px;top:175px;width:1px;height:22px;background:#D2D2D2;"></div>
<div style="left:830px;top:175px;width:1px;height:22px;background:#D2D2D2;"></div>
<div style="left:1058px;top:175px;width:1px;height:22px;background:#D2D2D2;"></div>
<div style="left:1151px;top:175px;width:1px;height:22px;background:#D2D2D2;"></div>
<div style="left:1225px;top:175px;width:1px;height:22px;background:#D2D2D2;"></div>
<div style="left:1263px;top:175px;width:1px;height:22px;background:#D2D2D2;"></div>
<div style="left:41px;top:175px;width:1px;height:22px;background:#D2D2D2;"></div>
<div class="t" style="left:2.90px;top:182.02px;font-size:11.2px;transform:scaleX(0.9632);transform-origin:0 0;">250593</div>
<div class="t" style="left:112.30px;top:181.34px;font-size:12px;letter-spacing:-0.008px;">Content production</div>
<div class="t" style="left:246.00px;top:181.02px;font-size:11.2px;transform:scaleX(0.8890);transform-origin:0 0;">HFDL</div>
<div class="t" style="left:316.10px;top:181.02px;font-size:11.2px;transform:scaleX(0.9699);transform-origin:0 0;">29.11.2025 11:05:45.023</div>
<div class="t" style="left:443.80px;top:181.02px;font-size:11.2px;transform:scaleX(0.9330);transform-origin:0 0;">RA73118</div>
<div class="t" style="left:535.40px;top:181.02px;font-size:11.2px;transform:scaleX(0.9351);transform-origin:0 0;">AL MUHARRAQ, BAHRAIN</div>
<div class="t" style="left:764.60px;top:181.02px;font-size:11.2px;transform:scaleX(0.8584);transform-origin:0 0;">PSK-2A</div>
<div style="left:0px;top:197px;width:1278px;height:22px;background:#EBEBEB;border-bottom:1px solid #CCCCCC;"></div>
<div style="left:42px;top:197px;width:67px;height:21px;background:#FF0000;"></div>
<div style="left:0px;top:197px;width:41px;height:21px;background:linear-gradient(#F8F8F8 0%,#F8F8F8 50%,#E9F1F9 55%,#E9F1F9 78%,#EBEBEB 80%,#EBEBEB 100%);"></div>
<div style="left:108px;top:197px;width:1px;height:22px;background:#D2D2D2;"></div>
<div style="left:241px;top:197px;width:1px;height:22px;background:#D2D2D2;"></div>
<div style="left:293px;top:197px;width:1px;height:22px;background:#D2D2D2;"></div>
<div style="left:439px;top:197px;width:1px;height:22px;background:#D2D2D2;"></div>
<div style="left:531px;top:197px;width:1px;height:22px;background:#D2D2D2;"></div>
<div style="left:760px;top:197px;width:1px;height:22px;background:#D2D2D2;"></div>
<div style="left:830px;top:197px;width:1px;height:22px;background:#D2D2D2;"></div>
<div style="left:1058px;top:197px;width:1px;height:22px;background:#D2D2D2;"></div>
<div style="left:1151px;top:197px;width:1px;height:22px;background:#D2D2D2;"></div>
<div style="left:1225px;top:197px;width:1px;height:22px;background:#D2D2D2;"></div>
<div style="left:1263px;top:197px;width:1px;height:22px;background:#D2D2D2;"></div>
<div style="left:41px;top:197px;width:1px;height:22px;background:#D2D2D2;"></div>
<div class="t" style="left:2.90px;top:204.02px;font-size:11.2px;transform:scaleX(0.9632);transform-origin:0 0;">250594</div>
<div class="t" style="left:112.30px;top:203.34px;font-size:12px;letter-spacing:-0.008px;">Content production</div>
<div class="t" style="left:246.00px;top:203.02px;font-size:11.2px;transform:scaleX(0.8890);transform-origin:0 0;">HFDL</div>
<div class="t" style="left:316.10px;top:203.02px;font-size:11.2px;transform:scaleX(0.9699);transform-origin:0 0;">29.11.2025 11:10:37.921</div>
<div class="t" style="left:443.80px;top:203.02px;font-size:11.2px;transform:scaleX(0.9330);transform-origin:0 0;">RA73118</div>
<div class="t" style="left:535.40px;top:203.02px;font-size:11.2px;transform:scaleX(0.9351);transform-origin:0 0;">AL MUHARRAQ, BAHRAIN</div>
<div class="t" style="left:764.60px;top:203.02px;font-size:11.2px;transform:scaleX(0.8584);transform-origin:0 0;">PSK-2A</div>
<div style="left:0px;top:219px;width:1278px;height:22px;background:#F9F9F9;border-bottom:1px solid #CCCCCC;"></div>
<div style="left:108px;top:219px;width:1170px;height:21px;background:#74B5FA;"></div>
<div style="left:42px;top:219px;width:67px;height:21px;background:#9C78A9;"></div>
<div style="left:0px;top:219px;width:41px;height:21px;background:linear-gradient(#F8F8F8 0%,#F8F8F8 50%,#E9F1F9 55%,#E9F1F9 78%,#EBEBEB 80%,#EBEBEB 100%);"></div>
<div style="left:108px;top:219px;width:1px;height:22px;background:#D2D2D2;"></div>
<div style="left:241px;top:219px;width:1px;height:22px;background:#D2D2D2;"></div>
<div style="left:293px;top:219px;width:1px;height:22px;background:#D2D2D2;"></div>
<div style="left:439px;top:219px;width:1px;height:22px;background:#D2D2D2;"></div>
<div style="left:531px;top:219px;width:1px;height:22px;background:#D2D2D2;"></div>
<div style="left:760px;top:219px;width:1px;height:22px;background:#D2D2D2;"></div>
<div style="left:830px;top:219px;width:1px;height:22px;background:#D2D2D2;"></div>
<div style="left:1058px;top:219px;width:1px;height:22px;background:#D2D2D2;"></div>
<div style="left:1151px;top:219px;width:1px;height:22px;background:#D2D2D2;"></div>
<div style="left:1225px;top:219px;width:1px;height:22px;background:#D2D2D2;"></div>
<div style="left:1263px;top:219px;width:1px;height:22px;background:#D2D2D2;"></div>
<div style="left:41px;top:219px;width:1px;height:22px;background:#D2D2D2;"></div>
<div class="t" style="left:2.90px;top:226.02px;font-size:11.2px;font-weight:700;transform:scaleX(0.9632);transform-origin:0 0;">250595</div>
<div class="t" style="left:112.30px;top:225.34px;font-size:12px;letter-spacing:-0.008px;">Content production</div>
<div class="t" style="left:246.00px;top:225.02px;font-size:11.2px;transform:scaleX(0.8890);transform-origin:0 0;">HFDL</div>
<div class="t" style="left:316.10px;top:225.02px;font-size:11.2px;transform:scaleX(0.9569);transform-origin:0 0;">08.12.2025 16:37:17.226</div>
<div class="t" style="left:443.80px;top:225.02px;font-size:11.2px;transform:scaleX(0.9330);transform-origin:0 0;">RA73118</div>
<div class="t" style="left:535.40px;top:225.02px;font-size:11.2px;transform:scaleX(0.9351);transform-origin:0 0;">AL MUHARRAQ, BAHRAIN</div>
<div class="t" style="left:764.60px;top:225.02px;font-size:11.2px;transform:scaleX(0.8584);transform-origin:0 0;">PSK-2A</div>
<div style="left:0px;top:241px;width:1278px;height:22px;background:#EBEBEB;border-bottom:1px solid #CCCCCC;"></div>
<div style="left:42px;top:241px;width:67px;height:21px;background:#FF0000;"></div>
<div style="left:0px;top:241px;width:41px;height:21px;background:linear-gradient(#F8F8F8 0%,#F8F8F8 50%,#E9F1F9 55%,#E9F1F9 78%,#EBEBEB 80%,#EBEBEB 100%);"></div>
<div style="left:108px;top:241px;width:1px;height:22px;background:#D2D2D2;"></div>
<div style="left:241px;top:241px;width:1px;height:22px;background:#D2D2D2;"></div>
<div style="left:293px;top:241px;width:1px;height:22px;background:#D2D2D2;"></div>
<div style="left:439px;top:241px;width:1px;height:22px;background:#D2D2D2;"></div>
<div style="left:531px;top:241px;width:1px;height:22px;background:#D2D2D2;"></div>
<div style="left:760px;top:241px;width:1px;height:22px;background:#D2D2D2;"></div>
<div style="left:830px;top:241px;width:1px;height:22px;background:#D2D2D2;"></div>
<div style="left:1058px;top:241px;width:1px;height:22px;background:#D2D2D2;"></div>
<div style="left:1151px;top:241px;width:1px;height:22px;background:#D2D2D2;"></div>
<div style="left:1225px;top:241px;width:1px;height:22px;background:#D2D2D2;"></div>
<div style="left:1263px;top:241px;width:1px;height:22px;background:#D2D2D2;"></div>
<div style="left:41px;top:241px;width:1px;height:22px;background:#D2D2D2;"></div>
<div class="t" style="left:2.90px;top:248.02px;font-size:11.2px;transform:scaleX(0.9632);transform-origin:0 0;">250596</div>
<div class="t" style="left:112.30px;top:247.34px;font-size:12px;letter-spacing:-0.008px;">Content production</div>
<div class="t" style="left:246.00px;top:247.02px;font-size:11.2px;transform:scaleX(0.8890);transform-origin:0 0;">HFDL</div>
<div class="t" style="left:316.10px;top:247.02px;font-size:11.2px;transform:scaleX(0.9569);transform-origin:0 0;">08.12.2025 21:10:30.663</div>
<div class="t" style="left:443.80px;top:247.02px;font-size:11.2px;transform:scaleX(0.9330);transform-origin:0 0;">RA73118</div>
<div class="t" style="left:535.40px;top:247.02px;font-size:11.2px;transform:scaleX(0.9334);transform-origin:0 0;">SHANNON, IRELAND</div>
<div class="t" style="left:764.60px;top:247.02px;font-size:11.2px;transform:scaleX(0.8584);transform-origin:0 0;">PSK-2A</div>
<div class="t" style="left:1084.00px;top:247.34px;font-size:12px;letter-spacing:-0.070px;">0.0015 MHz</div>
<div class="t" style="left:1179.00px;top:247.34px;font-size:12px;transform:scaleX(0.9397);transform-origin:0 0;">2450 Hz</div>
<div style="left:0px;top:263px;width:1278px;height:22px;background:#F9F9F9;border-bottom:1px solid #CCCCCC;"></div>
<div style="left:42px;top:263px;width:67px;height:21px;background:#FF0000;"></div>
<div style="left:0px;top:263px;width:41px;height:21px;background:linear-gradient(#F8F8F8 0%,#F8F8F8 50%,#E9F1F9 55%,#E9F1F9 78%,#EBEBEB 80%,#EBEBEB 100%);"></div>
<div style="left:108px;top:263px;width:1px;height:22px;background:#D2D2D2;"></div>
<div style="left:241px;top:263px;width:1px;height:22px;background:#D2D2D2;"></div>
<div style="left:293px;top:263px;width:1px;height:22px;background:#D2D2D2;"></div>
<div style="left:439px;top:263px;width:1px;height:22px;background:#D2D2D2;"></div>
<div style="left:531px;top:263px;width:1px;height:22px;background:#D2D2D2;"></div>
<div style="left:760px;top:263px;width:1px;height:22px;background:#D2D2D2;"></div>
<div style="left:830px;top:263px;width:1px;height:22px;background:#D2D2D2;"></div>
<div style="left:1058px;top:263px;width:1px;height:22px;background:#D2D2D2;"></div>
<div style="left:1151px;top:263px;width:1px;height:22px;background:#D2D2D2;"></div>
<div style="left:1225px;top:263px;width:1px;height:22px;background:#D2D2D2;"></div>
<div style="left:1263px;top:263px;width:1px;height:22px;background:#D2D2D2;"></div>
<div style="left:41px;top:263px;width:1px;height:22px;background:#D2D2D2;"></div>
<div class="t" style="left:2.90px;top:270.02px;font-size:11.2px;transform:scaleX(0.9632);transform-origin:0 0;">250597</div>
<div class="t" style="left:112.30px;top:269.34px;font-size:12px;letter-spacing:-0.008px;">Content production</div>
<div class="t" style="left:246.00px;top:269.02px;font-size:11.2px;transform:scaleX(0.8890);transform-origin:0 0;">HFDL</div>
<div class="t" style="left:316.10px;top:269.02px;font-size:11.2px;transform:scaleX(0.9699);transform-origin:0 0;">29.11.2025 11:18:10.820</div>
<div class="t" style="left:443.80px;top:269.02px;font-size:11.2px;transform:scaleX(0.9330);transform-origin:0 0;">RA73118</div>
<div class="t" style="left:535.40px;top:269.02px;font-size:11.2px;transform:scaleX(0.9351);transform-origin:0 0;">AL MUHARRAQ, BAHRAIN</div>
<div class="t" style="left:764.60px;top:269.02px;font-size:11.2px;transform:scaleX(0.8584);transform-origin:0 0;">PSK-2A</div>
<div style="left:0px;top:285px;width:1278px;height:22px;background:#EBEBEB;border-bottom:1px solid #CCCCCC;"></div>
<div style="left:42px;top:285px;width:67px;height:21px;background:#FF0000;"></div>
<div style="left:0px;top:285px;width:41px;height:21px;background:linear-gradient(#F8F8F8 0%,#F8F8F8 50%,#E9F1F9 55%,#E9F1F9 78%,#EBEBEB 80%,#EBEBEB 100%);"></div>
<div style="left:108px;top:285px;width:1px;height:22px;background:#D2D2D2;"></div>
<div style="left:241px;top:285px;width:1px;height:22px;background:#D2D2D2;"></div>
<div style="left:293px;top:285px;width:1px;height:22px;background:#D2D2D2;"></div>
<div style="left:439px;top:285px;width:1px;height:22px;background:#D2D2D2;"></div>
<div style="left:531px;top:285px;width:1px;height:22px;background:#D2D2D2;"></div>
<div style="left:760px;top:285px;width:1px;height:22px;background:#D2D2D2;"></div>
<div style="left:830px;top:285px;width:1px;height:22px;background:#D2D2D2;"></div>
<div style="left:1058px;top:285px;width:1px;height:22px;background:#D2D2D2;"></div>
<div style="left:1151px;top:285px;width:1px;height:22px;background:#D2D2D2;"></div>
<div style="left:1225px;top:285px;width:1px;height:22px;background:#D2D2D2;"></div>
<div style="left:1263px;top:285px;width:1px;height:22px;background:#D2D2D2;"></div>
<div style="left:41px;top:285px;width:1px;height:22px;background:#D2D2D2;"></div>
<div class="t" style="left:2.90px;top:292.02px;font-size:11.2px;transform:scaleX(0.9632);transform-origin:0 0;">250598</div>
<div class="t" style="left:112.30px;top:291.34px;font-size:12px;letter-spacing:-0.008px;">Content production</div>
<div class="t" style="left:246.00px;top:291.02px;font-size:11.2px;transform:scaleX(0.8890);transform-origin:0 0;">HFDL</div>
<div class="t" style="left:316.10px;top:291.02px;font-size:11.2px;transform:scaleX(0.9699);transform-origin:0 0;">29.11.2025 11:16:56.980</div>
<div class="t" style="left:443.80px;top:291.02px;font-size:11.2px;transform:scaleX(0.9330);transform-origin:0 0;">RA73118</div>
<div class="t" style="left:535.40px;top:291.02px;font-size:11.2px;transform:scaleX(0.9351);transform-origin:0 0;">AL MUHARRAQ, BAHRAIN</div>
<div class="t" style="left:764.60px;top:291.02px;font-size:11.2px;transform:scaleX(0.8584);transform-origin:0 0;">PSK-2A</div>
<div style="left:0px;top:307px;width:1278px;height:22px;background:#F9F9F9;border-bottom:1px solid #CCCCCC;"></div>
<div style="left:42px;top:307px;width:67px;height:21px;background:#FF0000;"></div>
<div style="left:0px;top:307px;width:41px;height:21px;background:linear-gradient(#F8F8F8 0%,#F8F8F8 50%,#E9F1F9 55%,#E9F1F9 78%,#EBEBEB 80%,#EBEBEB 100%);"></div>
<div style="left:108px;top:307px;width:1px;height:22px;background:#D2D2D2;"></div>
<div style="left:241px;top:307px;width:1px;height:22px;background:#D2D2D2;"></div>
<div style="left:293px;top:307px;width:1px;height:22px;background:#D2D2D2;"></div>
<div style="left:439px;top:307px;width:1px;height:22px;background:#D2D2D2;"></div>
<div style="left:531px;top:307px;width:1px;height:22px;background:#D2D2D2;"></div>
<div style="left:760px;top:307px;width:1px;height:22px;background:#D2D2D2;"></div>
<div style="left:830px;top:307px;width:1px;height:22px;background:#D2D2D2;"></div>
<div style="left:1058px;top:307px;width:1px;height:22px;background:#D2D2D2;"></div>
<div style="left:1151px;top:307px;width:1px;height:22px;background:#D2D2D2;"></div>
<div style="left:1225px;top:307px;width:1px;height:22px;background:#D2D2D2;"></div>
<div style="left:1263px;top:307px;width:1px;height:22px;background:#D2D2D2;"></div>
<div style="left:41px;top:307px;width:1px;height:22px;background:#D2D2D2;"></div>
<div class="t" style="left:2.90px;top:314.02px;font-size:11.2px;transform:scaleX(0.9632);transform-origin:0 0;">250599</div>
<div class="t" style="left:112.30px;top:313.34px;font-size:12px;letter-spacing:-0.008px;">Content production</div>
<div class="t" style="left:246.00px;top:313.02px;font-size:11.2px;transform:scaleX(0.8890);transform-origin:0 0;">HFDL</div>
<div class="t" style="left:316.10px;top:313.02px;font-size:11.2px;transform:scaleX(0.9569);transform-origin:0 0;">22.08.2025 17:41:00.084</div>
<div class="t" style="left:443.80px;top:313.02px;font-size:11.2px;transform:scaleX(0.9164);transform-origin:0 0;">RA73120</div>
<div class="t" style="left:535.40px;top:313.02px;font-size:11.2px;transform:scaleX(0.8601);transform-origin:0 0;">REYKJAVIK, ICELAND</div>
<div class="t" style="left:764.60px;top:313.02px;font-size:11.2px;transform:scaleX(0.8584);transform-origin:0 0;">PSK-2A</div>
<div style="left:0px;top:329px;width:1278px;height:22px;background:#EBEBEB;border-bottom:1px solid #CCCCCC;"></div>
<div style="left:42px;top:329px;width:67px;height:21px;background:#FF0000;"></div>
<div style="left:0px;top:329px;width:41px;height:21px;background:linear-gradient(#F8F8F8 0%,#F8F8F8 50%,#E9F1F9 55%,#E9F1F9 78%,#EBEBEB 80%,#EBEBEB 100%);"></div>
<div style="left:108px;top:329px;width:1px;height:22px;background:#D2D2D2;"></div>
<div style="left:241px;top:329px;width:1px;height:22px;background:#D2D2D2;"></div>
<div style="left:293px;top:329px;width:1px;height:22px;background:#D2D2D2;"></div>
<div style="left:439px;top:329px;width:1px;height:22px;background:#D2D2D2;"></div>
<div style="left:531px;top:329px;width:1px;height:22px;background:#D2D2D2;"></div>
<div style="left:760px;top:329px;width:1px;height:22px;background:#D2D2D2;"></div>
<div style="left:830px;top:329px;width:1px;height:22px;background:#D2D2D2;"></div>
<div style="left:1058px;top:329px;width:1px;height:22px;background:#D2D2D2;"></div>
<div style="left:1151px;top:329px;width:1px;height:22px;background:#D2D2D2;"></div>
<div style="left:1225px;top:329px;width:1px;height:22px;background:#D2D2D2;"></div>
<div style="left:1263px;top:329px;width:1px;height:22px;background:#D2D2D2;"></div>
<div style="left:41px;top:329px;width:1px;height:22px;background:#D2D2D2;"></div>
<div class="t" style="left:2.90px;top:336.02px;font-size:11.2px;transform:scaleX(0.9632);transform-origin:0 0;">250600</div>
<div class="t" style="left:112.30px;top:335.34px;font-size:12px;letter-spacing:-0.008px;">Content production</div>
<div class="t" style="left:246.00px;top:335.02px;font-size:11.2px;transform:scaleX(0.8890);transform-origin:0 0;">HFDL</div>
<div class="t" style="left:316.10px;top:335.02px;font-size:11.2px;transform:scaleX(0.9569);transform-origin:0 0;">22.08.2025 17:41:34.550</div>
<div class="t" style="left:443.80px;top:335.02px;font-size:11.2px;transform:scaleX(0.9164);transform-origin:0 0;">RA73120</div>
<div class="t" style="left:535.40px;top:335.02px;font-size:11.2px;transform:scaleX(0.8601);transform-origin:0 0;">REYKJAVIK, ICELAND</div>
<div class="t" style="left:764.60px;top:335.02px;font-size:11.2px;transform:scaleX(0.8584);transform-origin:0 0;">PSK-2A</div>
<div style="left:0px;top:351px;width:1278px;height:22px;background:#F9F9F9;border-bottom:1px solid #CCCCCC;"></div>
<div style="left:42px;top:351px;width:67px;height:21px;background:#FF0000;"></div>
<div style="left:0px;top:351px;width:41px;height:21px;background:linear-gradient(#F8F8F8 0%,#F8F8F8 50%,#E9F1F9 55%,#E9F1F9 78%,#EBEBEB 80%,#EBEBEB 100%);"></div>
<div style="left:108px;top:351px;width:1px;height:22px;background:#D2D2D2;"></div>
<div style="left:241px;top:351px;width:1px;height:22px;background:#D2D2D2;"></div>
<div style="left:293px;top:351px;width:1px;height:22px;background:#D2D2D2;"></div>
<div style="left:439px;top:351px;width:1px;height:22px;background:#D2D2D2;"></div>
<div style="left:531px;top:351px;width:1px;height:22px;background:#D2D2D2;"></div>
<div style="left:760px;top:351px;width:1px;height:22px;background:#D2D2D2;"></div>
<div style="left:830px;top:351px;width:1px;height:22px;background:#D2D2D2;"></div>
<div style="left:1058px;top:351px;width:1px;height:22px;background:#D2D2D2;"></div>
<div style="left:1151px;top:351px;width:1px;height:22px;background:#D2D2D2;"></div>
<div style="left:1225px;top:351px;width:1px;height:22px;background:#D2D2D2;"></div>
<div style="left:1263px;top:351px;width:1px;height:22px;background:#D2D2D2;"></div>
<div style="left:41px;top:351px;width:1px;height:22px;background:#D2D2D2;"></div>
<div class="t" style="left:2.90px;top:358.02px;font-size:11.2px;transform:scaleX(0.9632);transform-origin:0 0;">250601</div>
<div class="t" style="left:112.30px;top:357.34px;font-size:12px;letter-spacing:-0.008px;">Content production</div>
<div class="t" style="left:246.00px;top:357.02px;font-size:11.2px;transform:scaleX(0.8890);transform-origin:0 0;">HFDL</div>
<div class="t" style="left:316.10px;top:357.02px;font-size:11.2px;transform:scaleX(0.9569);transform-origin:0 0;">22.08.2025 17:32:30.480</div>
<div class="t" style="left:443.80px;top:357.02px;font-size:11.2px;transform:scaleX(0.9164);transform-origin:0 0;">RA73120</div>
<div class="t" style="left:535.40px;top:357.02px;font-size:11.2px;transform:scaleX(0.8601);transform-origin:0 0;">REYKJAVIK, ICELAND</div>
<div class="t" style="left:764.60px;top:357.02px;font-size:11.2px;transform:scaleX(0.8584);transform-origin:0 0;">PSK-2A</div>
<div style="left:0px;top:373px;width:1278px;height:22px;background:#EBEBEB;border-bottom:1px solid #CCCCCC;"></div>
<div style="left:42px;top:373px;width:67px;height:21px;background:#FF0000;"></div>
<div style="left:0px;top:373px;width:41px;height:21px;background:linear-gradient(#F8F8F8 0%,#F8F8F8 50%,#E9F1F9 55%,#E9F1F9 78%,#EBEBEB 80%,#EBEBEB 100%);"></div>
<div style="left:108px;top:373px;width:1px;height:22px;background:#D2D2D2;"></div>
<div style="left:241px;top:373px;width:1px;height:22px;background:#D2D2D2;"></div>
<div style="left:293px;top:373px;width:1px;height:22px;background:#D2D2D2;"></div>
<div style="left:439px;top:373px;width:1px;height:22px;background:#D2D2D2;"></div>
<div style="left:531px;top:373px;width:1px;height:22px;background:#D2D2D2;"></div>
<div style="left:760px;top:373px;width:1px;height:22px;background:#D2D2D2;"></div>
<div style="left:830px;top:373px;width:1px;height:22px;background:#D2D2D2;"></div>
<div style="left:1058px;top:373px;width:1px;height:22px;background:#D2D2D2;"></div>
<div style="left:1151px;top:373px;width:1px;height:22px;background:#D2D2D2;"></div>
<div style="left:1225px;top:373px;width:1px;height:22px;background:#D2D2D2;"></div>
<div style="left:1263px;top:373px;width:1px;height:22px;background:#D2D2D2;"></div>
<div style="left:41px;top:373px;width:1px;height:22px;background:#D2D2D2;"></div>
<div class="t" style="left:2.90px;top:380.02px;font-size:11.2px;transform:scaleX(0.9632);transform-origin:0 0;">250602</div>
<div class="t" style="left:112.30px;top:379.34px;font-size:12px;letter-spacing:-0.008px;">Content production</div>
<div class="t" style="left:246.00px;top:379.02px;font-size:11.2px;transform:scaleX(0.8890);transform-origin:0 0;">HFDL</div>
<div class="t" style="left:316.10px;top:379.02px;font-size:11.2px;transform:scaleX(0.9569);transform-origin:0 0;">22.08.2025 17:44:44.139</div>
<div class="t" style="left:443.80px;top:379.02px;font-size:11.2px;transform:scaleX(0.9164);transform-origin:0 0;">RA73120</div>
<div class="t" style="left:535.40px;top:379.02px;font-size:11.2px;transform:scaleX(0.8601);transform-origin:0 0;">REYKJAVIK, ICELAND</div>
<div class="t" style="left:764.60px;top:379.02px;font-size:11.2px;transform:scaleX(0.8584);transform-origin:0 0;">PSK-2A</div>
<div style="left:0px;top:395px;width:1278px;height:22px;background:#F9F9F9;border-bottom:1px solid #CCCCCC;"></div>
<div style="left:42px;top:395px;width:67px;height:21px;background:#FF0000;"></div>
<div style="left:0px;top:395px;width:41px;height:21px;background:linear-gradient(#F8F8F8 0%,#F8F8F8 50%,#E9F1F9 55%,#E9F1F9 78%,#EBEBEB 80%,#EBEBEB 100%);"></div>
<div style="left:108px;top:395px;width:1px;height:22px;background:#D2D2D2;"></div>
<div style="left:241px;top:395px;width:1px;height:22px;background:#D2D2D2;"></div>
<div style="left:293px;top:395px;width:1px;height:22px;background:#D2D2D2;"></div>
<div style="left:439px;top:395px;width:1px;height:22px;background:#D2D2D2;"></div>
<div style="left:531px;top:395px;width:1px;height:22px;background:#D2D2D2;"></div>
<div style="left:760px;top:395px;width:1px;height:22px;background:#D2D2D2;"></div>
<div style="left:830px;top:395px;width:1px;height:22px;background:#D2D2D2;"></div>
<div style="left:1058px;top:395px;width:1px;height:22px;background:#D2D2D2;"></div>
<div style="left:1151px;top:395px;width:1px;height:22px;background:#D2D2D2;"></div>
<div style="left:1225px;top:395px;width:1px;height:22px;background:#D2D2D2;"></div>
<div style="left:1263px;top:395px;width:1px;height:22px;background:#D2D2D2;"></div>
<div style="left:41px;top:395px;width:1px;height:22px;background:#D2D2D2;"></div>
<div class="t" style="left:2.90px;top:402.02px;font-size:11.2px;transform:scaleX(0.9632);transform-origin:0 0;">250603</div>
<div class="t" style="left:112.30px;top:401.34px;font-size:12px;letter-spacing:-0.008px;">Content production</div>
<div class="t" style="left:246.00px;top:401.02px;font-size:11.2px;transform:scaleX(0.8890);transform-origin:0 0;">HFDL</div>
<div class="t" style="left:316.10px;top:401.02px;font-size:11.2px;transform:scaleX(0.9569);transform-origin:0 0;">22.08.2025 17:37:28.364</div>
<div class="t" style="left:443.80px;top:401.02px;font-size:11.2px;transform:scaleX(0.9164);transform-origin:0 0;">RA73120</div>
<div class="t" style="left:535.40px;top:401.02px;font-size:11.2px;transform:scaleX(0.8601);transform-origin:0 0;">REYKJAVIK, ICELAND</div>
<div class="t" style="left:764.60px;top:401.02px;font-size:11.2px;transform:scaleX(0.8584);transform-origin:0 0;">PSK-2A</div>
<div style="left:0px;top:417px;width:1278px;height:22px;background:#EBEBEB;border-bottom:1px solid #CCCCCC;"></div>
<div style="left:42px;top:417px;width:67px;height:21px;background:#FF0000;"></div>
<div style="left:0px;top:417px;width:41px;height:21px;background:linear-gradient(#F8F8F8 0%,#F8F8F8 50%,#E9F1F9 55%,#E9F1F9 78%,#EBEBEB 80%,#EBEBEB 100%);"></div>
<div style="left:108px;top:417px;width:1px;height:22px;background:#D2D2D2;"></div>
<div style="left:241px;top:417px;width:1px;height:22px;background:#D2D2D2;"></div>
<div style="left:293px;top:417px;width:1px;height:22px;background:#D2D2D2;"></div>
<div style="left:439px;top:417px;width:1px;height:22px;background:#D2D2D2;"></div>
<div style="left:531px;top:417px;width:1px;height:22px;background:#D2D2D2;"></div>
<div style="left:760px;top:417px;width:1px;height:22px;background:#D2D2D2;"></div>
<div style="left:830px;top:417px;width:1px;height:22px;background:#D2D2D2;"></div>
<div style="left:1058px;top:417px;width:1px;height:22px;background:#D2D2D2;"></div>
<div style="left:1151px;top:417px;width:1px;height:22px;background:#D2D2D2;"></div>
<div style="left:1225px;top:417px;width:1px;height:22px;background:#D2D2D2;"></div>
<div style="left:1263px;top:417px;width:1px;height:22px;background:#D2D2D2;"></div>
<div style="left:41px;top:417px;width:1px;height:22px;background:#D2D2D2;"></div>
<div class="t" style="left:2.90px;top:424.02px;font-size:11.2px;transform:scaleX(0.9632);transform-origin:0 0;">250604</div>
<div class="t" style="left:112.30px;top:423.34px;font-size:12px;letter-spacing:-0.008px;">Content production</div>
<div class="t" style="left:246.00px;top:423.02px;font-size:11.2px;transform:scaleX(0.8890);transform-origin:0 0;">HFDL</div>
<div class="t" style="left:316.10px;top:423.02px;font-size:11.2px;transform:scaleX(0.9634);transform-origin:0 0;">04.11.2025 14:36:24.905</div>
<div class="t" style="left:443.80px;top:423.02px;font-size:11.2px;transform:scaleX(0.9164);transform-origin:0 0;">RA73124</div>
<div class="t" style="left:535.40px;top:423.02px;font-size:11.2px;transform:scaleX(0.8601);transform-origin:0 0;">REYKJAVIK, ICELAND</div>
<div class="t" style="left:764.60px;top:423.02px;font-size:11.2px;transform:scaleX(0.8584);transform-origin:0 0;">PSK-2A</div>
<div style="left:0px;top:439px;width:1278px;height:22px;background:#F9F9F9;border-bottom:1px solid #CCCCCC;"></div>
<div style="left:42px;top:439px;width:67px;height:21px;background:#FF0000;"></div>
<div style="left:0px;top:439px;width:41px;height:21px;background:linear-gradient(#F8F8F8 0%,#F8F8F8 50%,#E9F1F9 55%,#E9F1F9 78%,#EBEBEB 80%,#EBEBEB 100%);"></div>
<div style="left:108px;top:439px;width:1px;height:22px;background:#D2D2D2;"></div>
<div style="left:241px;top:439px;width:1px;height:22px;background:#D2D2D2;"></div>
<div style="left:293px;top:439px;width:1px;height:22px;background:#D2D2D2;"></div>
<div style="left:439px;top:439px;width:1px;height:22px;background:#D2D2D2;"></div>
<div style="left:531px;top:439px;width:1px;height:22px;background:#D2D2D2;"></div>
<div style="left:760px;top:439px;width:1px;height:22px;background:#D2D2D2;"></div>
<div style="left:830px;top:439px;width:1px;height:22px;background:#D2D2D2;"></div>
<div style="left:1058px;top:439px;width:1px;height:22px;background:#D2D2D2;"></div>
<div style="left:1151px;top:439px;width:1px;height:22px;background:#D2D2D2;"></div>
<div style="left:1225px;top:439px;width:1px;height:22px;background:#D2D2D2;"></div>
<div style="left:1263px;top:439px;width:1px;height:22px;background:#D2D2D2;"></div>
<div style="left:41px;top:439px;width:1px;height:22px;background:#D2D2D2;"></div>
<div class="t" style="left:2.90px;top:446.02px;font-size:11.2px;transform:scaleX(0.9632);transform-origin:0 0;">250605</div>
<div class="t" style="left:112.30px;top:445.34px;font-size:12px;letter-spacing:-0.008px;">Content production</div>
<div class="t" style="left:246.00px;top:445.02px;font-size:11.2px;transform:scaleX(0.8890);transform-origin:0 0;">HFDL</div>
<div class="t" style="left:316.10px;top:445.02px;font-size:11.2px;transform:scaleX(0.9569);transform-origin:0 0;">16.08.2025 13:23:55.131</div>
<div class="t" style="left:443.80px;top:445.02px;font-size:11.2px;transform:scaleX(0.9164);transform-origin:0 0;">RA73127</div>
<div class="t" style="left:535.40px;top:445.02px;font-size:11.2px;transform:scaleX(0.8601);transform-origin:0 0;">REYKJAVIK, ICELAND</div>
<div class="t" style="left:764.60px;top:445.02px;font-size:11.2px;transform:scaleX(0.8584);transform-origin:0 0;">PSK-2A</div>
<div style="left:0px;top:461px;width:1278px;height:22px;background:#EBEBEB;border-bottom:1px solid #CCCCCC;"></div>
<div style="left:42px;top:461px;width:67px;height:21px;background:#FF0000;"></div>
<div style="left:0px;top:461px;width:41px;height:21px;background:linear-gradient(#F8F8F8 0%,#F8F8F8 50%,#E9F1F9 55%,#E9F1F9 78%,#EBEBEB 80%,#EBEBEB 100%);"></div>
<div style="left:108px;top:461px;width:1px;height:22px;background:#D2D2D2;"></div>
<div style="left:241px;top:461px;width:1px;height:22px;background:#D2D2D2;"></div>
<div style="left:293px;top:461px;width:1px;height:22px;background:#D2D2D2;"></div>
<div style="left:439px;top:461px;width:1px;height:22px;background:#D2D2D2;"></div>
<div style="left:531px;top:461px;width:1px;height:22px;background:#D2D2D2;"></div>
<div style="left:760px;top:461px;width:1px;height:22px;background:#D2D2D2;"></div>
<div style="left:830px;top:461px;width:1px;height:22px;background:#D2D2D2;"></div>
<div style="left:1058px;top:461px;width:1px;height:22px;background:#D2D2D2;"></div>
<div style="left:1151px;top:461px;width:1px;height:22px;background:#D2D2D2;"></div>
<div style="left:1225px;top:461px;width:1px;height:22px;background:#D2D2D2;"></div>
<div style="left:1263px;top:461px;width:1px;height:22px;background:#D2D2D2;"></div>
<div style="left:41px;top:461px;width:1px;height:22px;background:#D2D2D2;"></div>
<div class="t" style="left:2.90px;top:468.02px;font-size:11.2px;transform:scaleX(0.9632);transform-origin:0 0;">250606</div>
<div class="t" style="left:112.30px;top:467.34px;font-size:12px;letter-spacing:-0.008px;">Content production</div>
<div class="t" style="left:246.00px;top:467.02px;font-size:11.2px;transform:scaleX(0.8890);transform-origin:0 0;">HFDL</div>
<div class="t" style="left:316.10px;top:467.02px;font-size:11.2px;transform:scaleX(0.9569);transform-origin:0 0;">17.08.2025 17:35:05.143</div>
<div class="t" style="left:443.80px;top:467.02px;font-size:11.2px;transform:scaleX(0.9164);transform-origin:0 0;">RA73127</div>
<div class="t" style="left:535.40px;top:467.02px;font-size:11.2px;transform:scaleX(0.9351);transform-origin:0 0;">AL MUHARRAQ, BAHRAIN</div>
<div class="t" style="left:764.60px;top:467.02px;font-size:11.2px;transform:scaleX(0.8584);transform-origin:0 0;">PSK-2A</div>
<div style="left:0px;top:483px;width:1278px;height:22px;background:#F9F9F9;border-bottom:1px solid #CCCCCC;"></div>
<div style="left:42px;top:483px;width:67px;height:21px;background:#FF0000;"></div>
<div style="left:0px;top:483px;width:41px;height:21px;background:linear-gradient(#F8F8F8 0%,#F8F8F8 50%,#E9F1F9 55%,#E9F1F9 78%,#EBEBEB 80%,#EBEBEB 100%);"></div>
<div style="left:108px;top:483px;width:1px;height:22px;background:#D2D2D2;"></div>
<div style="left:241px;top:483px;width:1px;height:22px;background:#D2D2D2;"></div>
<div style="left:293px;top:483px;width:1px;height:22px;background:#D2D2D2;"></div>
<div style="left:439px;top:483px;width:1px;height:22px;background:#D2D2D2;"></div>
<div style="left:531px;top:483px;width:1px;height:22px;background:#D2D2D2;"></div>
<div style="left:760px;top:483px;width:1px;height:22px;background:#D2D2D2;"></div>
<div style="left:830px;top:483px;width:1px;height:22px;background:#D2D2D2;"></div>
<div style="left:1058px;top:483px;width:1px;height:22px;background:#D2D2D2;"></div>
<div style="left:1151px;top:483px;width:1px;height:22px;background:#D2D2D2;"></div>
<div style="left:1225px;top:483px;width:1px;height:22px;background:#D2D2D2;"></div>
<div style="left:1263px;top:483px;width:1px;height:22px;background:#D2D2D2;"></div>
<div style="left:41px;top:483px;width:1px;height:22px;background:#D2D2D2;"></div>
<div class="t" style="left:2.90px;top:490.02px;font-size:11.2px;transform:scaleX(0.9632);transform-origin:0 0;">250607</div>
<div class="t" style="left:112.30px;top:489.34px;font-size:12px;letter-spacing:-0.008px;">Content production</div>
<div class="t" style="left:246.00px;top:489.02px;font-size:11.2px;transform:scaleX(0.8890);transform-origin:0 0;">HFDL</div>
<div class="t" style="left:316.10px;top:489.02px;font-size:11.2px;transform:scaleX(0.9569);transform-origin:0 0;">25.12.2025 13:55:09.219</div>
<div class="t" style="left:443.80px;top:489.02px;font-size:11.2px;transform:scaleX(0.9164);transform-origin:0 0;">RA73127</div>
<div class="t" style="left:535.40px;top:489.02px;font-size:11.2px;transform:scaleX(0.8601);transform-origin:0 0;">REYKJAVIK, ICELAND</div>
<div class="t" style="left:764.60px;top:489.02px;font-size:11.2px;transform:scaleX(0.8584);transform-origin:0 0;">PSK-2A</div>
<div style="left:0px;top:505px;width:1278px;height:22px;background:#EBEBEB;border-bottom:1px solid #CCCCCC;"></div>
<div style="left:42px;top:505px;width:67px;height:21px;background:#FF0000;"></div>
<div style="left:0px;top:505px;width:41px;height:21px;background:linear-gradient(#F8F8F8 0%,#F8F8F8 50%,#E9F1F9 55%,#E9F1F9 78%,#EBEBEB 80%,#EBEBEB 100%);"></div>
<div style="left:108px;top:505px;width:1px;height:22px;background:#D2D2D2;"></div>
<div style="left:241px;top:505px;width:1px;height:22px;background:#D2D2D2;"></div>
<div style="left:293px;top:505px;width:1px;height:22px;background:#D2D2D2;"></div>
<div style="left:439px;top:505px;width:1px;height:22px;background:#D2D2D2;"></div>
<div style="left:531px;top:505px;width:1px;height:22px;background:#D2D2D2;"></div>
<div style="left:760px;top:505px;width:1px;height:22px;background:#D2D2D2;"></div>
<div style="left:830px;top:505px;width:1px;height:22px;background:#D2D2D2;"></div>
<div style="left:1058px;top:505px;width:1px;height:22px;background:#D2D2D2;"></div>
<div style="left:1151px;top:505px;width:1px;height:22px;background:#D2D2D2;"></div>
<div style="left:1225px;top:505px;width:1px;height:22px;background:#D2D2D2;"></div>
<div style="left:1263px;top:505px;width:1px;height:22px;background:#D2D2D2;"></div>
<div style="left:41px;top:505px;width:1px;height:22px;background:#D2D2D2;"></div>
<div class="t" style="left:2.90px;top:512.02px;font-size:11.2px;transform:scaleX(0.9632);transform-origin:0 0;">250608</div>
<div class="t" style="left:112.30px;top:511.34px;font-size:12px;letter-spacing:-0.008px;">Content production</div>
<div class="t" style="left:246.00px;top:511.02px;font-size:11.2px;transform:scaleX(0.8890);transform-origin:0 0;">HFDL</div>
<div class="t" style="left:316.10px;top:511.02px;font-size:11.2px;transform:scaleX(0.9569);transform-origin:0 0;">21.12.2025 12:24:48.928</div>
<div class="t" style="left:443.80px;top:511.02px;font-size:11.2px;transform:scaleX(0.9164);transform-origin:0 0;">RA73127</div>
<div class="t" style="left:535.40px;top:511.02px;font-size:11.2px;transform:scaleX(0.8601);transform-origin:0 0;">REYKJAVIK, ICELAND</div>
<div class="t" style="left:764.60px;top:511.02px;font-size:11.2px;transform:scaleX(0.8584);transform-origin:0 0;">PSK-2A</div>
<div style="left:0px;top:527px;width:1278px;height:22px;background:#F9F9F9;border-bottom:1px solid #CCCCCC;"></div>
<div style="left:42px;top:527px;width:67px;height:21px;background:#FF0000;"></div>
<div style="left:0px;top:527px;width:41px;height:21px;background:linear-gradient(#F8F8F8 0%,#F8F8F8 50%,#E9F1F9 55%,#E9F1F9 78%,#EBEBEB 80%,#EBEBEB 100%);"></div>
<div style="left:108px;top:527px;width:1px;height:22px;background:#D2D2D2;"></div>
<div style="left:241px;top:527px;width:1px;height:22px;background:#D2D2D2;"></div>
<div style="left:293px;top:527px;width:1px;height:22px;background:#D2D2D2;"></div>
<div style="left:439px;top:527px;width:1px;height:22px;background:#D2D2D2;"></div>
<div style="left:531px;top:527px;width:1px;height:22px;background:#D2D2D2;"></div>
<div style="left:760px;top:527px;width:1px;height:22px;background:#D2D2D2;"></div>
<div style="left:830px;top:527px;width:1px;height:22px;background:#D2D2D2;"></div>
<div style="left:1058px;top:527px;width:1px;height:22px;background:#D2D2D2;"></div>
<div style="left:1151px;top:527px;width:1px;height:22px;background:#D2D2D2;"></div>
<div style="left:1225px;top:527px;width:1px;height:22px;background:#D2D2D2;"></div>
<div style="left:1263px;top:527px;width:1px;height:22px;background:#D2D2D2;"></div>
<div style="left:41px;top:527px;width:1px;height:22px;background:#D2D2D2;"></div>
<div class="t" style="left:2.90px;top:534.02px;font-size:11.2px;transform:scaleX(0.9632);transform-origin:0 0;">250609</div>
<div class="t" style="left:112.30px;top:533.34px;font-size:12px;letter-spacing:-0.008px;">Content production</div>
<div class="t" style="left:246.00px;top:533.02px;font-size:11.2px;transform:scaleX(0.8890);transform-origin:0 0;">HFDL</div>
<div class="t" style="left:316.10px;top:533.02px;font-size:11.2px;transform:scaleX(0.9699);transform-origin:0 0;">29.11.2025 11:14:14.534</div>
<div class="t" style="left:443.80px;top:533.02px;font-size:11.2px;transform:scaleX(0.9164);transform-origin:0 0;">RA73127</div>
<div class="t" style="left:535.40px;top:533.02px;font-size:11.2px;transform:scaleX(0.9351);transform-origin:0 0;">AL MUHARRAQ, BAHRAIN</div>
<div class="t" style="left:764.60px;top:533.02px;font-size:11.2px;transform:scaleX(0.8584);transform-origin:0 0;">PSK-2A</div>
<div style="left:0px;top:549px;width:1278px;height:22px;background:#EBEBEB;border-bottom:1px solid #CCCCCC;"></div>
<div style="left:42px;top:549px;width:67px;height:21px;background:#FF0000;"></div>
<div style="left:0px;top:549px;width:41px;height:21px;background:linear-gradient(#F8F8F8 0%,#F8F8F8 50%,#E9F1F9 55%,#E9F1F9 78%,#EBEBEB 80%,#EBEBEB 100%);"></div>
<div style="left:108px;top:549px;width:1px;height:22px;background:#D2D2D2;"></div>
<div style="left:241px;top:549px;width:1px;height:22px;background:#D2D2D2;"></div>
<div style="left:293px;top:549px;width:1px;height:22px;background:#D2D2D2;"></div>
<div style="left:439px;top:549px;width:1px;height:22px;background:#D2D2D2;"></div>
<div style="left:531px;top:549px;width:1px;height:22px;background:#D2D2D2;"></div>
<div style="left:760px;top:549px;width:1px;height:22px;background:#D2D2D2;"></div>
<div style="left:830px;top:549px;width:1px;height:22px;background:#D2D2D2;"></div>
<div style="left:1058px;top:549px;width:1px;height:22px;background:#D2D2D2;"></div>
<div style="left:1151px;top:549px;width:1px;height:22px;background:#D2D2D2;"></div>
<div style="left:1225px;top:549px;width:1px;height:22px;background:#D2D2D2;"></div>
<div style="left:1263px;top:549px;width:1px;height:22px;background:#D2D2D2;"></div>
<div style="left:41px;top:549px;width:1px;height:22px;background:#D2D2D2;"></div>
<div class="t" style="left:2.90px;top:556.02px;font-size:11.2px;transform:scaleX(0.9632);transform-origin:0 0;">250610</div>
<div class="t" style="left:112.30px;top:555.34px;font-size:12px;letter-spacing:-0.008px;">Content production</div>
<div class="t" style="left:246.00px;top:555.02px;font-size:11.2px;transform:scaleX(0.8890);transform-origin:0 0;">HFDL</div>
<div class="t" style="left:316.10px;top:555.02px;font-size:11.2px;transform:scaleX(0.9699);transform-origin:0 0;">29.11.2025 11:03:24.730</div>
<div class="t" style="left:443.80px;top:555.02px;font-size:11.2px;transform:scaleX(0.9164);transform-origin:0 0;">RA73127</div>
<div class="t" style="left:535.40px;top:555.02px;font-size:11.2px;transform:scaleX(0.9351);transform-origin:0 0;">AL MUHARRAQ, BAHRAIN</div>
<div class="t" style="left:764.60px;top:555.02px;font-size:11.2px;transform:scaleX(0.8584);transform-origin:0 0;">PSK-2A</div>
<div style="left:0px;top:571px;width:1278px;height:22px;background:#F9F9F9;border-bottom:1px solid #CCCCCC;"></div>
<div style="left:42px;top:571px;width:67px;height:21px;background:#FF0000;"></div>
<div style="left:0px;top:571px;width:41px;height:21px;background:linear-gradient(#F8F8F8 0%,#F8F8F8 50%,#E9F1F9 55%,#E9F1F9 78%,#EBEBEB 80%,#EBEBEB 100%);"></div>
<div style="left:108px;top:571px;width:1px;height:22px;background:#D2D2D2;"></div>
<div style="left:241px;top:571px;width:1px;height:22px;background:#D2D2D2;"></div>
<div style="left:293px;top:571px;width:1px;height:22px;background:#D2D2D2;"></div>
<div style="left:439px;top:571px;width:1px;height:22px;background:#D2D2D2;"></div>
<div style="left:531px;top:571px;width:1px;height:22px;background:#D2D2D2;"></div>
<div style="left:760px;top:571px;width:1px;height:22px;background:#D2D2D2;"></div>
<div style="left:830px;top:571px;width:1px;height:22px;background:#D2D2D2;"></div>
<div style="left:1058px;top:571px;width:1px;height:22px;background:#D2D2D2;"></div>
<div style="left:1151px;top:571px;width:1px;height:22px;background:#D2D2D2;"></div>
<div style="left:1225px;top:571px;width:1px;height:22px;background:#D2D2D2;"></div>
<div style="left:1263px;top:571px;width:1px;height:22px;background:#D2D2D2;"></div>
<div style="left:41px;top:571px;width:1px;height:22px;background:#D2D2D2;"></div>
<div class="t" style="left:2.90px;top:578.02px;font-size:11.2px;letter-spacing:-0.091px;">250611</div>
<div class="t" style="left:112.30px;top:577.34px;font-size:12px;letter-spacing:-0.008px;">Content production</div>
<div class="t" style="left:246.00px;top:577.02px;font-size:11.2px;transform:scaleX(0.8890);transform-origin:0 0;">HFDL</div>
<div class="t" style="left:316.10px;top:577.02px;font-size:11.2px;transform:scaleX(0.9569);transform-origin:0 0;">23.10.2025 18:25:16.412</div>
<div class="t" style="left:443.80px;top:577.02px;font-size:11.2px;transform:scaleX(0.9164);transform-origin:0 0;">RA73127</div>
<div class="t" style="left:535.40px;top:577.02px;font-size:11.2px;transform:scaleX(0.9334);transform-origin:0 0;">SHANNON, IRELAND</div>
<div class="t" style="left:764.60px;top:577.02px;font-size:11.2px;transform:scaleX(0.8584);transform-origin:0 0;">PSK-2A</div>
<div style="left:0px;top:584px;width:1278px;height:15px;background:#EFEFEF;border-top:1px solid #DADADA;border-bottom:1px solid #B8B8B8;"></div>
<div style="left:0px;top:584px;width:16px;height:14px;background:#E8E8E8;border-right:1px solid #D8D8D8;"></div>
<svg style="left:5px;top:587px" width="6" height="9" viewBox="0 0 6 9"><path d="M6 0V9L0 4.5Z" fill="#555"/></svg>
<div style="left:1263px;top:0px;width:15px;height:584px;background:#EEEEEE;border-left:1px solid #D0D0D0;"></div>
<div style="left:1263px;top:0px;width:15px;height:14px;background:#E6E6E6;border:1px solid #C8C8C8;"></div>
<svg style="left:1266px;top:4px" width="9" height="5" viewBox="0 0 9 5"><path d="M0 5H9L4.5 0Z" fill="#555"/></svg>
</div>
<div style="left:27px;top:293px;width:1px;height:584px;background:#C0C0C0;"></div>
<div style="left:465px;top:291px;width:95px;height:575px;border:3px solid #F00000;"></div>
<div style="left:1262px;top:262px;width:41px;height:23px;background:linear-gradient(#FAFAFA,#EEF3F9);border:1px solid #C8CDD2;border-radius:3px;"></div>
<div style="left:1274px;top:269px;width:22px;height:10px;background:linear-gradient(#D0D0D0,#B4B4B4);border:1px solid #7A7A7A;border-radius:2px;"></div>
<div style="left:539px;top:896px;width:192px;height:28px;border:3px solid #F00000;"></div>
<div style="left:542px;top:899px;width:186px;height:22px;background:linear-gradient(#F8F8F8 0%,#F8F8F8 60%,#E8EFF8 100%);"></div>
<svg style="left:546px;top:906px" width="14" height="8" viewBox="0 0 14 8"><path d="M0.5 0.5H13.5L7 7.5Z" fill="#3B7CC4" stroke="#2A5C95" stroke-width="0.8"/><path d="M2 1.2H12L7 4Z" fill="#8AB8E8"/></svg>
<div class="t" style="left:563.40px;top:905.24px;font-size:12px;letter-spacing:-0.141px;">Advanced sorting [ Sender ID ]</div>
<div style="left:1245px;top:898px;width:60px;height:23px;background:linear-gradient(#FCFCFC 0%,#F4F4F4 55%,#E7EEF7 100%);border:1px solid #B9BEC4;border-radius:3px;"></div>
<svg style="left:1247px;top:900px" width="17" height="17" viewBox="0 0 17 17"><defs><radialGradient id="gl" cx="35%" cy="30%" r="70%"><stop offset="0" stop-color="#9FD0FF"/><stop offset="0.6" stop-color="#2E73C8"/><stop offset="1" stop-color="#133F80"/></radialGradient></defs><circle cx="8.5" cy="8.5" r="8" fill="url(#gl)"/><path d="M3 5 Q6 3 8 5 Q7 8 5 9 Q3 8 3 5Z M9 9 Q12 8 14 10 Q13 14 10 15 Q9 12 9 9Z M11 2 Q14 3 15 6 Q13 6 11 4Z" fill="#4CAF50"/></svg>
<div class="t" style="left:1267.00px;top:905.84px;font-size:12px;transform:scaleX(0.9424);transform-origin:0 0;">Map</div>
<div style="left:13px;top:943px;width:80px;height:24px;background:linear-gradient(#FCFCFC 0%,#F4F4F4 55%,#E7EEF7 100%);border:1px solid #B9BEC4;border-radius:3px;"></div>
<div class="t" style="left:30.00px;top:950.34px;font-size:12px;letter-spacing:0.053px;">Export</div>
<svg style="left:77.5px;top:953px" width="7" height="4" viewBox="0 0 7 4"><path d="M0 0H7L3.5 4Z" fill="#555"/></svg>
<div style="left:99px;top:943px;width:80px;height:24px;background:linear-gradient(#FCFCFC 0%,#F4F4F4 55%,#E7EEF7 100%);border:1px solid #B9BEC4;border-radius:3px;"></div>
<div class="t" style="left:116.00px;top:950.34px;font-size:12px;letter-spacing:-0.115px;">Delete</div>
<svg style="left:163.5px;top:953px" width="7" height="4" viewBox="0 0 7 4"><path d="M0 0H7L3.5 4Z" fill="#555"/></svg>
<div style="left:185px;top:943px;width:80px;height:24px;background:linear-gradient(#FCFCFC 0%,#F4F4F4 55%,#E7EEF7 100%);border:1px solid #B9BEC4;border-radius:3px;"></div>
<div class="t" style="left:196.00px;top:950.34px;font-size:12px;letter-spacing:0.121px;">Add flag</div>
<svg style="left:249.5px;top:953px" width="7" height="4" viewBox="0 0 7 4"><path d="M0 0H7L3.5 4Z" fill="#555"/></svg>
<div style="left:271px;top:943px;width:86px;height:24px;background:linear-gradient(#FCFCFC 0%,#F4F4F4 55%,#E7EEF7 100%);border:1px solid #B9BEC4;border-radius:3px;"></div>
<div class="t" style="left:275.00px;top:950.34px;font-size:12px;letter-spacing:0.148px;">Remove flag</div>
<svg style="left:341.5px;top:953px" width="7" height="4" viewBox="0 0 7 4"><path d="M0 0H7L3.5 4Z" fill="#555"/></svg>
<div style="left:363px;top:943px;width:94px;height:24px;background:linear-gradient(#FCFCFC 0%,#F4F4F4 55%,#E7EEF7 100%);border:1px solid #B9BEC4;border-radius:3px;"></div>
<div class="t" style="left:367.00px;top:950.34px;font-size:12px;transform:scaleX(0.9686);transform-origin:0 0;color:#9A9A9A;">System action</div>
<svg style="left:441.5px;top:953px" width="7" height="4" viewBox="0 0 7 4"><path d="M0 0H7L3.5 4Z" fill="#A0A0A0"/></svg>
<div style="left:1098px;top:943px;width:81px;height:24px;background:linear-gradient(#FCFCFC 0%,#F4F4F4 55%,#E7EEF7 100%);border:1px solid #B9BEC4;border-radius:3px;"></div>
<div class="t" style="left:1103.00px;top:950.34px;font-size:12px;letter-spacing:-0.136px;">Export table...</div>
<div style="left:1200px;top:943px;width:25px;height:24px;background:linear-gradient(#FCFCFC 0%,#F4F4F4 55%,#E7EEF7 100%);border:1px solid #B9BEC4;border-radius:3px;"></div>
<div class="t" style="left:1206.00px;top:950.34px;font-size:12px;letter-spacing:0.938px;">|&lt;</div>
<div style="left:1226px;top:943px;width:25px;height:24px;background:linear-gradient(#FCFCFC 0%,#F4F4F4 55%,#E7EEF7 100%);border:1px solid #B9BEC4;border-radius:3px;"></div>
<div class="t" style="left:1235.00px;top:950.34px;font-size:12px;">&lt;</div>
<div class="t" style="left:1252.40px;top:950.34px;font-size:12px;transform:scaleX(0.8857);transform-origin:0 0;">Page 51</div>
<div style="left:1293px;top:943px;width:25px;height:24px;background:linear-gradient(#FCFCFC 0%,#F4F4F4 55%,#E7EEF7 100%);border:1px solid #B9BEC4;border-radius:3px;"></div>
<div class="t" style="left:1301.50px;top:950.34px;font-size:12px;">&gt;</div>
<div style="left:1px;top:979px;width:1330px;height:23px;background:#EAF1F9;"></div>
<div class="t" style="left:3.50px;top:986.84px;font-size:12px;transform:scaleX(0.9603);transform-origin:0 0;">Advanced filter EMPTY, Displaying 255000 results</div>
<svg style="left:1318px;top:990px" width="11" height="11"><rect x="8" y="0" width="2" height="2" fill="#B8BEC6"/><rect x="8" y="4" width="2" height="2" fill="#B8BEC6"/><rect x="4" y="4" width="2" height="2" fill="#B8BEC6"/><rect x="8" y="8" width="2" height="2" fill="#B8BEC6"/><rect x="4" y="8" width="2" height="2" fill="#B8BEC6"/><rect x="0" y="8" width="2" height="2" fill="#B8BEC6"/></svg>
<div style="left:389px;top:179px;width:394px;height:80px;background:#000;"></div>
<div class="t" style="left:391.80px;top:182.44px;font-size:14.6px;font-weight:700;letter-spacing:0.063px;color:#fff;">&lt;decoderResult0&gt;</div>
<div class="t" style="left:399.30px;top:202.24px;font-size:14.6px;font-weight:700;letter-spacing:0.650px;color:#fff;">&lt;startTime&gt;2025-12-08T16:37:17.226Z&lt;/startTime&gt;</div>
<div class="t" style="left:399.30px;top:222.04px;font-size:14.6px;font-weight:700;letter-spacing:0.642px;color:#fff;">&lt;newInfoUnit time=&quot;2025-12-08T16:37:17.226Z&quot;/&gt;</div>
<div class="t" style="left:399.30px;top:241.84px;font-size:14.6px;font-weight:700;letter-spacing:0.623px;color:#fff;">&lt;text1&gt;</div>
<div style="left:790px;top:92px;width:498px;height:306px;background:#FFB900;"></div>
<div style="left:791px;top:117px;width:496px;height:280px;background:#EAF1F9;"></div>
<svg style="left:794px;top:97px" width="16" height="16" viewBox="0 0 16 16" shape-rendering="crispEdges"><rect x="0" y="0" width="15" height="15" fill="#FFFFFF"/><rect x="1" y="1" width="1" height="5" fill="#0000F0"/><rect x="2" y="1" width="1" height="1" fill="#0000F0"/><rect x="3" y="2" width="1" height="3" fill="#0000F0"/><rect x="2" y="5" width="1" height="1" fill="#0000F0"/><rect x="6" y="2" width="1" height="1" fill="#0000F0"/><rect x="6" y="4" width="1" height="1" fill="#0000F0"/><rect x="9" y="2" width="1" height="1" fill="#0000F0"/><rect x="9" y="4" width="1" height="1" fill="#0000F0"/><rect x="12" y="1" width="1" height="1" fill="#0000F0"/><rect x="11" y="2" width="1" height="3" fill="#0000F0"/><rect x="12" y="5" width="1" height="1" fill="#0000F0"/><rect x="14" y="1" width="1" height="5" fill="#0000F0"/><rect x="7" y="6" width="2" height="3" fill="#000"/><rect x="6" y="9" width="1" height="2" fill="#000"/><rect x="9" y="9" width="1" height="2" fill="#000"/><rect x="6" y="11" width="4" height="1" fill="#000"/><rect x="5" y="12" width="1" height="1" fill="#000"/><rect x="10" y="12" width="1" height="1" fill="#000"/><rect x="0" y="13" width="15" height="2" fill="#7E868C"/><rect x="0" y="15" width="16" height="1" fill="#000"/><rect x="15" y="0" width="1" height="16" fill="#000"/></svg>
<div class="t" style="left:816.00px;top:99.44px;font-size:12px;transform:scaleX(0.9399);transform-origin:0 0;color:#000;">The 2026 Super Frequency List</div>
<div style="left:1168px;top:105px;width:10px;height:1px;background:#000;"></div>
<div style="left:1213px;top:100px;width:10px;height:10px;border:1px solid #A89A28;"></div>
<svg style="left:1259px;top:100px" width="11" height="11" viewBox="0 0 11 11"><path d="M0.5 0.5L10.5 10.5M10.5 0.5L0.5 10.5" stroke="#000" stroke-width="1.1"/></svg>
<div style="left:791px;top:117px;width:496px;height:22px;background:#EAF1F9;"></div>
<div style="left:857px;top:138px;width:430px;height:1px;background:#FFFFFF;"></div>
<div style="left:857px;top:139px;width:430px;height:1px;background:#E6E2DE;"></div>
<div style="left:792px;top:118px;width:66px;height:21px;background:#EAF1F9;border-left:1px solid #FFF;border-top:1px solid #FFF;border-right:2px solid #6A6A6A;"></div>
<div class="t" style="left:799.20px;top:122.34px;font-size:12px;transform:scaleX(0.8959);transform-origin:0 0;">Databases</div>
<div style="left:799.2px;top:133px;width:7px;height:1px;background:#000;"></div>
<div style="left:858px;top:120px;width:53px;height:18px;background:#EAF1F9;border-left:1px solid #FFF;border-top:1px solid #FFF;border-right:2px solid #6A6A6A;"></div>
<div class="t" style="left:862.00px;top:123.84px;font-size:12px;transform:scaleX(0.8354);transform-origin:0 0;">Text files</div>
<div style="left:862px;top:134.5px;width:6px;height:1px;background:#000;"></div>
<div style="left:911px;top:120px;width:179px;height:18px;background:#EAF1F9;border-left:1px solid #FFF;border-top:1px solid #FFF;border-right:2px solid #6A6A6A;"></div>
<div class="t" style="left:916.00px;top:123.84px;font-size:12px;transform:scaleX(0.8807);transform-origin:0 0;">Additional text files and screenshots</div>
<div style="left:1090px;top:120px;width:42px;height:18px;background:#EAF1F9;border-left:1px solid #FFF;border-top:1px solid #FFF;border-right:2px solid #6A6A6A;"></div>
<div class="t" style="left:1094.00px;top:123.84px;font-size:12px;letter-spacing:0.128px;">About</div>
<div style="left:1094px;top:134.5px;width:7px;height:1px;background:#000;"></div>
<div style="left:1286px;top:139px;width:1px;height:258px;background:#8A9BB0;"></div>
<div style="left:791px;top:349px;width:493px;height:2px;background:#6A6A6A;"></div>
<div style="left:807px;top:161px;width:85px;height:33px;background:#EAF1F9;border-left:1px solid #FFF;border-top:1px solid #FFF;border-right:2px solid #6A6A6A;border-bottom:2px solid #6A6A6A;"></div>
<div class="t" style="left:826.09px;top:171.07px;font-size:13.5px;transform:scaleX(0.9600);transform-origin:0 0;">OldFreq</div>
<div style="left:826px;top:183px;width:9px;height:1px;background:#000;"></div>
<div style="left:807px;top:209px;width:85px;height:33px;background:#EAF1F9;border:1px solid #000;"></div>
<div style="left:808px;top:210px;width:83px;height:31px;border-left:1px solid #FFF;border-top:1px solid #FFF;border-right:2px solid #6A6A6A;border-bottom:2px solid #6A6A6A;"></div>
<div style="left:811px;top:213px;width:77px;height:25px;border:1px dotted #000;"></div>
<div class="t" style="left:826.45px;top:219.07px;font-size:13.5px;transform:scaleX(0.9600);transform-origin:0 0;">UT2026</div>
<div style="left:827px;top:231px;width:9px;height:1px;background:#000;"></div>
<div style="left:807px;top:257px;width:85px;height:33px;background:#EAF1F9;border-left:1px solid #FFF;border-top:1px solid #FFF;border-right:2px solid #6A6A6A;border-bottom:2px solid #6A6A6A;"></div>
<div class="t" style="left:826.08px;top:267.07px;font-size:13.5px;transform:scaleX(0.9600);transform-origin:0 0;">BC2026</div>
<div style="left:826px;top:279px;width:9px;height:1px;background:#000;"></div>
<div class="t" style="left:907.00px;top:163.42px;font-size:13.8px;transform:scaleX(0.9263);transform-origin:0 0;">Formerly active frequencies</div>
<div class="t" style="left:907.00px;top:211.32px;font-size:13.8px;transform:scaleX(0.9493);transform-origin:0 0;">Utility stations 2026</div>
<div class="t" style="left:907.00px;top:258.92px;font-size:13.8px;transform:scaleX(0.9493);transform-origin:0 0;">Broadcast stations 2026</div>
<div style="left:832px;top:306px;width:500px;height:240px;background:#FFB900;"></div>
<svg style="left:841px;top:313px" width="16" height="16" viewBox="0 0 16 16" shape-rendering="crispEdges"><rect x="0" y="0" width="15" height="15" fill="#FFFFFF"/><rect x="1" y="1" width="1" height="5" fill="#0000F0"/><rect x="2" y="1" width="1" height="1" fill="#0000F0"/><rect x="3" y="2" width="1" height="3" fill="#0000F0"/><rect x="2" y="5" width="1" height="1" fill="#0000F0"/><rect x="6" y="2" width="1" height="1" fill="#0000F0"/><rect x="6" y="4" width="1" height="1" fill="#0000F0"/><rect x="9" y="2" width="1" height="1" fill="#0000F0"/><rect x="9" y="4" width="1" height="1" fill="#0000F0"/><rect x="12" y="1" width="1" height="1" fill="#0000F0"/><rect x="11" y="2" width="1" height="3" fill="#0000F0"/><rect x="12" y="5" width="1" height="1" fill="#0000F0"/><rect x="14" y="1" width="1" height="5" fill="#0000F0"/><rect x="7" y="6" width="2" height="3" fill="#000"/><rect x="6" y="9" width="1" height="2" fill="#000"/><rect x="9" y="9" width="1" height="2" fill="#000"/><rect x="6" y="11" width="4" height="1" fill="#000"/><rect x="5" y="12" width="1" height="1" fill="#000"/><rect x="10" y="12" width="1" height="1" fill="#000"/><rect x="0" y="13" width="15" height="2" fill="#7E868C"/><rect x="0" y="15" width="16" height="1" fill="#000"/><rect x="15" y="0" width="1" height="16" fill="#000"/></svg>
<div class="t" style="left:862.50px;top:316.34px;font-size:12px;transform:scaleX(0.9424);transform-origin:0 0;">UT2026- sorted by Freq.</div>
<div style="left:1212px;top:321px;width:10px;height:1px;background:#000;"></div>
<div style="left:1257px;top:316px;width:10px;height:10px;border:1px solid #000;"></div>
<svg style="left:1303px;top:316px" width="11" height="11" viewBox="0 0 11 11"><path d="M0.5 0.5L10.5 10.5M10.5 0.5L0.5 10.5" stroke="#000" stroke-width="1.1"/></svg>
<div style="left:833px;top:337px;width:498px;height:21px;background:#F8F8F8;"></div>
<div class="t" style="left:840.00px;top:339.70px;font-size:13px;transform:scaleX(0.8831);transform-origin:0 0;">File</div>
<div style="left:840px;top:353px;width:7px;height:1px;background:#000;"></div>
<div class="t" style="left:872.00px;top:339.70px;font-size:13px;transform:scaleX(0.8497);transform-origin:0 0;">Search</div>
<div style="left:872px;top:353px;width:8px;height:1px;background:#000;"></div>
<div class="t" style="left:921.00px;top:339.70px;font-size:13px;transform:scaleX(0.8705);transform-origin:0 0;">Edit</div>
<div style="left:921px;top:353px;width:8px;height:1px;background:#000;"></div>
<div class="t" style="left:955.00px;top:339.70px;font-size:13px;transform:scaleX(0.8976);transform-origin:0 0;">Help</div>
<div style="left:955px;top:353px;width:8px;height:1px;background:#000;"></div>
<div style="left:833px;top:357px;width:498px;height:188px;background:#F9F9F9;"></div>
<div style="left:833px;top:357px;width:498px;height:2px;background:#696969;"></div>
<div style="left:833px;top:357px;width:2px;height:188px;background:#696969;"></div>
<div style="left:835px;top:359px;width:477px;height:21px;background:#E9F0F8;border-bottom:1px solid #000;"></div>
<div style="left:912px;top:359px;width:1px;height:20px;background:#000;"></div>
<div style="left:970px;top:359px;width:1px;height:20px;background:#000;"></div>
<div style="left:1138px;top:359px;width:1px;height:20px;background:#000;"></div>
<div style="left:1191px;top:359px;width:1px;height:20px;background:#000;"></div>
<div style="left:1264px;top:359px;width:1px;height:20px;background:#000;"></div>
<div style="left:1311px;top:359px;width:1px;height:20px;background:#000;"></div>
<div class="t" style="left:836.50px;top:360.95px;font-size:14px;font-weight:700;">Freq.</div>
<div class="t" style="left:914.50px;top:361.37px;font-size:13.5px;">Callsign</div>
<div class="t" style="left:972.00px;top:361.37px;font-size:13.5px;">Station</div>
<div class="t" style="left:1140.50px;top:361.37px;font-size:13.5px;">Country</div>
<div class="t" style="left:1193.00px;top:361.37px;font-size:13.5px;">Modulation</div>
<div class="t" style="left:1266.00px;top:361.37px;font-size:13.5px;">Details</div>
<div style="left:835px;top:380px;width:477px;height:165px;overflow:hidden;">
<div style="left:0px;top:20px;width:477px;height:1px;background:#C8C8C8;"></div>
<div style="left:77px;top:0px;width:1px;height:21px;background:#C8C8C8;"></div>
<div style="left:135px;top:0px;width:1px;height:21px;background:#C8C8C8;"></div>
<div style="left:303px;top:0px;width:1px;height:21px;background:#C8C8C8;"></div>
<div style="left:356px;top:0px;width:1px;height:21px;background:#C8C8C8;"></div>
<div style="left:429px;top:0px;width:1px;height:21px;background:#C8C8C8;"></div>
<div class="t" style="left:1.50px;top:1.95px;font-size:14px;font-weight:700;color:#000;">10024,0</div>
<div class="t" style="left:137.00px;top:2.37px;font-size:13.5px;color:#000;">Ushuaia Air</div>
<div class="t" style="left:305.50px;top:2.37px;font-size:13.5px;color:#000;">ARG</div>
<div class="t" style="left:358.00px;top:2.37px;font-size:13.5px;color:#000;">SSB</div>
<div style="left:0px;top:41px;width:477px;height:1px;background:#C8C8C8;"></div>
<div style="left:77px;top:21px;width:1px;height:21px;background:#C8C8C8;"></div>
<div style="left:135px;top:21px;width:1px;height:21px;background:#C8C8C8;"></div>
<div style="left:303px;top:21px;width:1px;height:21px;background:#C8C8C8;"></div>
<div style="left:356px;top:21px;width:1px;height:21px;background:#C8C8C8;"></div>
<div style="left:429px;top:21px;width:1px;height:21px;background:#C8C8C8;"></div>
<div class="t" style="left:1.50px;top:22.95px;font-size:14px;font-weight:700;color:#000;">10027,0</div>
<div class="t" style="left:137.00px;top:23.37px;font-size:13.5px;color:#000;">AMS</div>
<div class="t" style="left:358.00px;top:23.37px;font-size:13.5px;color:#000;">SSB</div>
<div style="left:0px;top:62px;width:477px;height:1px;background:#C8C8C8;"></div>
<div style="left:77px;top:42px;width:1px;height:21px;background:#C8C8C8;"></div>
<div style="left:135px;top:42px;width:1px;height:21px;background:#C8C8C8;"></div>
<div style="left:303px;top:42px;width:1px;height:21px;background:#C8C8C8;"></div>
<div style="left:356px;top:42px;width:1px;height:21px;background:#C8C8C8;"></div>
<div style="left:429px;top:42px;width:1px;height:21px;background:#C8C8C8;"></div>
<div class="t" style="left:1.50px;top:43.95px;font-size:14px;font-weight:700;color:#000;">10027,0</div>
<div class="t" style="left:79.50px;top:44.37px;font-size:13.5px;color:#000;">+H02+</div>
<div class="t" style="left:137.00px;top:44.37px;font-size:13.5px;color:#000;">Hoolehua Air, Molokai</div>
<div class="t" style="left:305.50px;top:44.37px;font-size:13.5px;color:#000;">HWA</div>
<div class="t" style="left:358.00px;top:44.37px;font-size:13.5px;color:#000;">DIG</div>
<div class="t" style="left:431.00px;top:44.37px;font-size:13.5px;color:#000;">HFDL</div>
<div style="left:0px;top:83px;width:477px;height:1px;background:#C8C8C8;"></div>
<div style="left:77px;top:63px;width:1px;height:21px;background:#C8C8C8;"></div>
<div style="left:135px;top:63px;width:1px;height:21px;background:#C8C8C8;"></div>
<div style="left:303px;top:63px;width:1px;height:21px;background:#C8C8C8;"></div>
<div style="left:356px;top:63px;width:1px;height:21px;background:#C8C8C8;"></div>
<div style="left:429px;top:63px;width:1px;height:21px;background:#C8C8C8;"></div>
<div class="t" style="left:1.50px;top:64.95px;font-size:14px;font-weight:700;color:#000;">10027,0</div>
<div class="t" style="left:79.50px;top:65.37px;font-size:13.5px;color:#000;">+H09+</div>
<div class="t" style="left:137.00px;top:65.37px;font-size:13.5px;color:#000;">Barrow Air</div>
<div class="t" style="left:305.50px;top:65.37px;font-size:13.5px;color:#000;">ALS</div>
<div class="t" style="left:358.00px;top:65.37px;font-size:13.5px;color:#000;">DIG</div>
<div class="t" style="left:431.00px;top:65.37px;font-size:13.5px;color:#000;">HFDL</div>
<div style="left:0px;top:104px;width:477px;height:1px;background:#C8C8C8;"></div>
<div style="left:77px;top:84px;width:1px;height:21px;background:#C8C8C8;"></div>
<div style="left:135px;top:84px;width:1px;height:21px;background:#C8C8C8;"></div>
<div style="left:303px;top:84px;width:1px;height:21px;background:#C8C8C8;"></div>
<div style="left:356px;top:84px;width:1px;height:21px;background:#C8C8C8;"></div>
<div style="left:429px;top:84px;width:1px;height:21px;background:#C8C8C8;"></div>
<div class="t" style="left:1.50px;top:85.95px;font-size:14px;font-weight:700;color:#000;">10030,0</div>
<div class="t" style="left:137.00px;top:86.37px;font-size:13.5px;color:#000;">AMS</div>
<div class="t" style="left:358.00px;top:86.37px;font-size:13.5px;color:#000;">SSB</div>
<div style="left:0px;top:105px;width:477px;height:20px;background:#003399;"></div>
<div style="left:0px;top:125px;width:477px;height:1px;background:#C8C8C8;"></div>
<div style="left:77px;top:105px;width:1px;height:21px;background:#C8C8C8;"></div>
<div style="left:135px;top:105px;width:1px;height:21px;background:#C8C8C8;"></div>
<div style="left:303px;top:105px;width:1px;height:21px;background:#C8C8C8;"></div>
<div style="left:356px;top:105px;width:1px;height:21px;background:#C8C8C8;"></div>
<div style="left:429px;top:105px;width:1px;height:21px;background:#C8C8C8;"></div>
<div class="t" style="left:1.50px;top:106.95px;font-size:14px;font-weight:700;color:#fff;">10030,0</div>
<div class="t" style="left:79.50px;top:107.37px;font-size:13.5px;color:#fff;">+H15+</div>
<div class="t" style="left:137.00px;top:107.37px;font-size:13.5px;color:#fff;">Muhurroq Air</div>
<div class="t" style="left:305.50px;top:107.37px;font-size:13.5px;color:#fff;">BHR</div>
<div class="t" style="left:358.00px;top:107.37px;font-size:13.5px;color:#fff;">DIG</div>
<div class="t" style="left:431.00px;top:107.37px;font-size:13.5px;color:#fff;">HFDL</div>
<div style="left:0px;top:146px;width:477px;height:1px;background:#C8C8C8;"></div>
<div style="left:77px;top:126px;width:1px;height:21px;background:#C8C8C8;"></div>
<div style="left:135px;top:126px;width:1px;height:21px;background:#C8C8C8;"></div>
<div style="left:303px;top:126px;width:1px;height:21px;background:#C8C8C8;"></div>
<div style="left:356px;top:126px;width:1px;height:21px;background:#C8C8C8;"></div>
<div style="left:429px;top:126px;width:1px;height:21px;background:#C8C8C8;"></div>
<div class="t" style="left:1.50px;top:127.95px;font-size:14px;font-weight:700;color:#000;">10033,0</div>
<div class="t" style="left:137.00px;top:128.37px;font-size:13.5px;color:#000;">AMS</div>
<div class="t" style="left:358.00px;top:128.37px;font-size:13.5px;color:#000;">SSB</div>
<div style="left:0px;top:167px;width:477px;height:1px;background:#C8C8C8;"></div>
<div style="left:77px;top:147px;width:1px;height:21px;background:#C8C8C8;"></div>
<div style="left:135px;top:147px;width:1px;height:21px;background:#C8C8C8;"></div>
<div style="left:303px;top:147px;width:1px;height:21px;background:#C8C8C8;"></div>
<div style="left:356px;top:147px;width:1px;height:21px;background:#C8C8C8;"></div>
<div style="left:429px;top:147px;width:1px;height:21px;background:#C8C8C8;"></div>
<div class="t" style="left:1.50px;top:148.95px;font-size:14px;font-weight:700;color:#000;">10033,0</div>
<div class="t" style="left:137.00px;top:149.37px;font-size:13.5px;color:#000;">Pan Am R, Grapevine, TX</div>
<div class="t" style="left:305.50px;top:149.37px;font-size:13.5px;color:#000;">USA</div>
<div class="t" style="left:358.00px;top:149.37px;font-size:13.5px;color:#000;">SSB</div>
</div>
<div style="left:1311px;top:379px;width:2px;height:166px;background:#C8C8C8;"></div>
<div style="left:1313px;top:359px;width:18px;height:186px;background:#E9F0F8;"></div>
<svg style="left:1317px;top:365px" width="8" height="6" viewBox="0 0 8 6"><path d="M0.5 5.5L4 1.5L7.5 5.5" stroke="#555" stroke-width="1.6" fill="none"/></svg>
<svg style="left:1317px;top:531px" width="8" height="6" viewBox="0 0 8 6"><path d="M0.5 0.5L4 4.5L7.5 0.5" stroke="#555" stroke-width="1.6" fill="none"/></svg>
<div style="left:1314px;top:452px;width:16px;height:17px;background:#D4D4D4;"></div>
<div style="left:863px;top:551px;width:464px;height:338px;background:#EAF1F9;border:1px solid #6B6B6B;"></div>
<div style="left:867px;top:581px;width:456px;height:304px;background:#F8F8F8;border:1px solid #A9A9A9;"></div>
<div style="left:867px;top:557px;width:64px;height:24px;background:#EAEAEA;border:1px solid #BDBDBD;border-bottom:none;border-radius:3px 3px 0 0;"></div>
<div class="t" style="left:879.50px;top:565.44px;font-size:12px;letter-spacing:-0.122px;">General</div>
<div style="left:931px;top:557px;width:56px;height:24px;background:#EAEAEA;border:1px solid #BDBDBD;border-bottom:none;border-radius:3px 3px 0 0;"></div>
<div class="t" style="left:942.60px;top:565.44px;font-size:12px;">Signal</div>
<div style="left:1054px;top:557px;width:68px;height:24px;background:#EAEAEA;border:1px solid #BDBDBD;border-bottom:none;border-radius:3px 3px 0 0;"></div>
<div class="t" style="left:1066.00px;top:565.44px;font-size:12px;">Position</div>
<div style="left:1121px;top:557px;width:78px;height:24px;background:#EAEAEA;border:1px solid #BDBDBD;border-bottom:none;border-radius:3px 3px 0 0;"></div>
<div class="t" style="left:1133.00px;top:565.44px;font-size:12px;letter-spacing:-0.100px;">Multi-Edit</div>
<div style="left:1198px;top:557px;width:94px;height:24px;overflow:hidden;">
<div style="left:0px;top:0px;width:110px;height:24px;background:#EAEAEA;border:1px solid #BDBDBD;border-bottom:none;border-radius:3px 3px 0 0;"></div>
<div class="t" style="left:12.00px;top:8.44px;font-size:12px;letter-spacing:0.171px;">Matching frequencies</div>
</div>
<div style="left:987px;top:555px;width:68px;height:27px;background:#F8F8F8;border:1px solid #A9A9A9;border-bottom:none;border-radius:3px 3px 0 0;"></div>
<div class="t" style="left:999.50px;top:564.54px;font-size:12px;">Content</div>
<div style="left:1293px;top:555px;width:15px;height:25px;background:linear-gradient(#FAFAFA,#F0F0F0 70%,#E4EBF3);border:1px solid #C6C6C6;border-radius:3px;"></div>
<div style="left:1307px;top:555px;width:15px;height:25px;background:linear-gradient(#FAFAFA,#F0F0F0 70%,#E4EBF3);border:1px solid #C6C6C6;border-radius:3px;"></div>
<svg style="left:1298px;top:564px" width="5" height="8" viewBox="0 0 5 8"><path d="M5 0V8L0 4Z" fill="#A8A8A8"/></svg>
<svg style="left:1313px;top:564px" width="5" height="8" viewBox="0 0 5 8"><path d="M0 0V8L5 4Z" fill="#444"/></svg>
<div class="t" style="left:878.50px;top:596.34px;font-size:12px;letter-spacing:-0.118px;">Decoded text</div>
<div style="left:879px;top:611px;width:431px;height:67px;background:#F5F5F5;border:1px solid #E2E2E2;border-radius:2px;"></div>
<div style="left:881px;top:616px;width:428px;height:60px;background:#FAFAFA;border:1px solid #A9A9A9;"></div>
<div style="left:882px;top:617px;width:426px;height:17px;background:#E8F0F8;"></div>
<svg style="left:886px;top:617px" width="14" height="17" viewBox="0 0 14 17"><path d="M0.5 0.5H9L13.5 5V16.5H0.5Z" fill="#CFE1F4" stroke="#4D7FB8"/><path d="M3 5h6M3 7.5h8M3 10h8M3 12.5h8M3 15h6" stroke="#4D7FB8" stroke-width="0.9"/></svg>
<div class="t" style="left:907.50px;top:620.84px;font-size:12px;transform:scaleX(0.9045);transform-origin:0 0;">16:37:17 - 16:37:19 [2.1s], 20251208.163717.0226_10001_199.dec</div>
<svg style="left:1088px;top:679px" width="16" height="2"><rect x="0" y="0" width="1" height="1" fill="#C0C0C0"/><rect x="2" y="0" width="1" height="1" fill="#C0C0C0"/><rect x="4" y="0" width="1" height="1" fill="#C0C0C0"/><rect x="6" y="0" width="1" height="1" fill="#C0C0C0"/><rect x="8" y="0" width="1" height="1" fill="#C0C0C0"/><rect x="10" y="0" width="1" height="1" fill="#C0C0C0"/><rect x="12" y="0" width="1" height="1" fill="#C0C0C0"/><rect x="14" y="0" width="1" height="1" fill="#C0C0C0"/></svg>
<div style="left:879px;top:683px;width:102px;height:23px;background:linear-gradient(#FDFDFD 0%,#F7F7F7 70%,#EEF3F9 100%);border:1px solid #ADB2B8;border-radius:2px;"></div>
<div class="t" style="left:884.00px;top:689.84px;font-size:12px;letter-spacing:-0.002px;">Text</div>
<svg style="left:965px;top:692px" width="8" height="5" viewBox="0 0 8 5"><path d="M0 0H8L4 5Z" fill="#606060"/></svg>
<svg style="left:988px;top:686px" width="18" height="15" viewBox="0 0 18 15"><rect x="1" y="2" width="6" height="4" fill="#333"/><rect x="11" y="2" width="6" height="4" fill="#333"/><circle cx="4.5" cy="10" r="4.2" fill="#3A3A3A"/><circle cx="13.5" cy="10" r="4.2" fill="#3A3A3A"/><circle cx="4" cy="9.5" r="2" fill="#8EA9C8"/><circle cx="13" cy="9.5" r="2" fill="#8EA9C8"/><rect x="7" y="5" width="4" height="3" fill="#333"/></svg>
<svg style="left:1016px;top:686px" width="15" height="17" viewBox="0 0 15 17"><path d="M4.5 0.5H11L14.5 4V13.5H4.5Z" fill="#F7F7F7" stroke="#A8A8A8"/><path d="M0.5 3.5H7L10.5 7V16.5H0.5Z" fill="#FAFAFA" stroke="#A8A8A8"/><path d="M2.5 9h6M2.5 11h6M2.5 13h6" stroke="#C8C8C8"/></svg>
<svg style="left:1043px;top:686px" width="16" height="16" viewBox="0 0 16 16"><path d="M0 0H13L16 3V16H0Z" fill="#1E1E1E"/><rect x="3" y="1" width="9" height="5" fill="#E8E8E8"/><rect x="3" y="9" width="10" height="6" fill="#B8C8D8"/></svg>
<svg style="left:1070px;top:686px" width="17" height="17" viewBox="0 0 17 17"><path d="M3 0.5H15.5V13L13 16.5H0.5V4Z" fill="#D8D8D8" stroke="#6A6A6A"/><path d="M3 4h10v9H3z" fill="#F0F0F0" stroke="#8A8A8A"/><path d="M5 6h6M5 8h6M5 10h6" stroke="#9A9A9A"/></svg>
<svg style="left:1098px;top:687px" width="17" height="13" viewBox="0 0 17 13"><path d="M0 1h11M0 5h11M0 9h11M0 12h8" stroke="#3E5F8A" stroke-width="1.6"/><rect x="11" y="3" width="6" height="5" fill="#222"/></svg>
<div style="left:879px;top:708px;width:433px;height:166px;background:#F9F9F9;border:1px solid #A9A9A9;"></div>
<div style="left:1297px;top:709px;width:14px;height:164px;background:#F9F9F9;border-left:1px solid #C4C4C4;"></div>
<div style="left:1298px;top:724px;width:13px;height:94px;background:#E8E6E3;"></div>
<svg style="left:1300px;top:713px" width="9" height="5" viewBox="0 0 9 5"><path d="M0 5H9L4.5 0Z" fill="#555"/></svg>
<svg style="left:1300px;top:864px" width="9" height="5" viewBox="0 0 9 5"><path d="M0 0H9L4.5 5Z" fill="#555"/></svg>
<div style="left:1297px;top:859px;width:14px;height:1px;background:#C8C8C8;"></div>
<div style="left:1297px;top:723px;width:14px;height:1px;background:#C8C8C8;"></div>
<div class="t" style="left:883.60px;top:714.06px;font-size:14.7px;font-weight:700;transform:scaleX(0.9272);transform-origin:0 0;">Parsed:</div>
<div class="t" style="left:883.00px;top:733.96px;font-size:14.7px;font-weight:700;transform:scaleX(0.9271);transform-origin:0 0;">ACARS:</div>
<div class="t" style="left:887.60px;top:753.96px;font-size:14.7px;font-weight:700;transform:scaleX(0.9612);transform-origin:0 0;">Reassembly: skipped</div>
<div class="t" style="left:887.60px;top:773.96px;font-size:14.7px;font-weight:700;transform:scaleX(0.8877);transform-origin:0 0;">Reg:</div>
<div class="t" style="left:921.00px;top:773.96px;font-size:14.7px;font-weight:700;letter-spacing:0.814px;">RA73118</div>
<div class="t" style="left:993.00px;top:773.96px;font-size:14.7px;font-weight:700;letter-spacing:-0.079px;">Flight: SU0430</div>
<div class="t" style="left:887.60px;top:793.86px;font-size:14.7px;font-weight:700;letter-spacing:0.003px;">Mode: 2 Label: H1 Blk id: 6 More: 0 Ack: ! Msg num: F41A</div>
<div class="t" style="left:887.60px;top:813.86px;font-size:14.7px;font-weight:700;transform:scaleX(0.9662);transform-origin:0 0;">Sublabel: M1</div>
<div class="t" style="left:887.60px;top:833.76px;font-size:14.7px;font-weight:700;transform:scaleX(0.9552);transform-origin:0 0;">Message:</div>
<div style="left:891px;top:851px;width:353px;height:19px;background:#000080;"></div>
<div class="t" style="left:892.50px;top:853.56px;font-size:14.7px;font-weight:700;letter-spacing:0.246px;color:#FFFF00;">PRG/FNAFL430/DTHESH,04L,102,135301,309C38</div>
<div style="left:917px;top:769px;width:76px;height:23px;border:2px solid #F00000;"></div>
</div></body></html>
